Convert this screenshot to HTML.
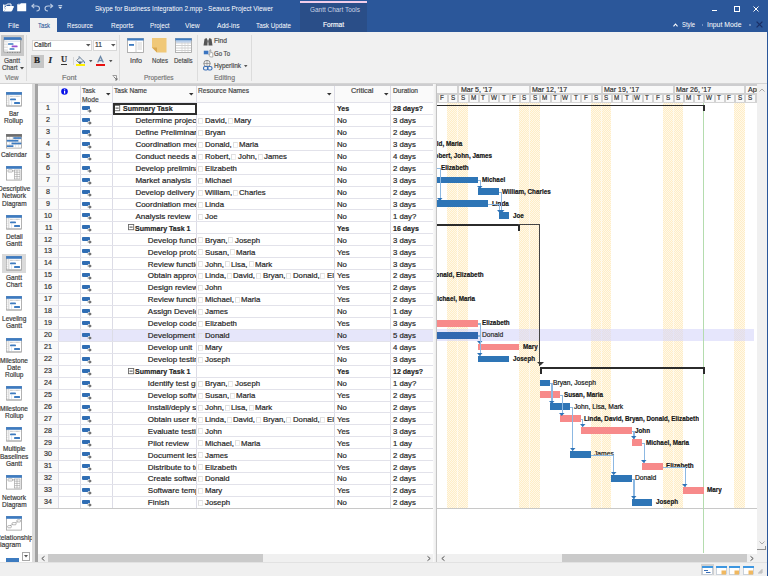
<!DOCTYPE html>
<html><head><meta charset="utf-8"><style>
html,body{margin:0;padding:0;width:768px;height:576px;overflow:hidden;background:#f0f0f0;}
body{position:relative;font-family:"Liberation Sans",sans-serif;}
body div{position:absolute;box-sizing:border-box;}
.t{white-space:nowrap;transform-origin:0 50%;-webkit-text-stroke:0.2px currentColor;}
svg{position:absolute;overflow:visible;}
</style></head><body>
<div style="left:0px;top:0px;width:768px;height:32px;background:#2b579a"></div>
<div style="left:300px;top:3px;width:67px;height:29px;background:#2a4e88"></div>
<div style="left:300px;top:1px;width:67px;height:2px;background:#f2cdea"></div>
<div class="t" style="left:95.00px;top:3.93px;font-size:8px;line-height:9.60px;color:#ffffff;transform:scaleX(0.8075);-webkit-text-stroke:0">Skype for Business Integration 2.mpp - Seavus Project Viewer</div>
<div class="t" style="left:310.00px;top:4.53px;font-size:8px;line-height:9.60px;color:#c9d3e6;transform:scaleX(0.8049);-webkit-text-stroke:0">Gantt Chart Tools</div>
<div style="left:30px;top:18px;width:27px;height:14px;background:#f1f1f1"></div>
<div class="t" style="left:8.00px;top:20.93px;font-size:8px;line-height:9.60px;color:#ffffff;transform:scaleX(0.8531);-webkit-text-stroke:0">File</div>
<div class="t" style="left:38.00px;top:20.93px;font-size:8px;line-height:9.60px;color:#2b579a;transform:scaleX(0.7294);-webkit-text-stroke:0.1px currentColor">Task</div>
<div class="t" style="left:67.00px;top:20.93px;font-size:8px;line-height:9.60px;color:#ffffff;transform:scaleX(0.7593);-webkit-text-stroke:0">Resource</div>
<div class="t" style="left:110.50px;top:20.93px;font-size:8px;line-height:9.60px;color:#ffffff;transform:scaleX(0.8031);-webkit-text-stroke:0">Reports</div>
<div class="t" style="left:150.00px;top:20.93px;font-size:8px;line-height:9.60px;color:#ffffff;transform:scaleX(0.7831);-webkit-text-stroke:0">Project</div>
<div class="t" style="left:185.00px;top:20.93px;font-size:8px;line-height:9.60px;color:#ffffff;transform:scaleX(0.8431);-webkit-text-stroke:0">View</div>
<div class="t" style="left:216.50px;top:20.93px;font-size:8px;line-height:9.60px;color:#ffffff;transform:scaleX(0.8294);-webkit-text-stroke:0">Add-ins</div>
<div class="t" style="left:256.00px;top:20.93px;font-size:8px;line-height:9.60px;color:#ffffff;transform:scaleX(0.7869);-webkit-text-stroke:0">Task Update</div>
<div class="t" style="left:323.00px;top:20.43px;font-size:8px;line-height:9.60px;color:#ffffff;transform:scaleX(0.8288);-webkit-text-stroke:0.15px currentColor">Format</div>
<div class="t" style="left:682.00px;top:19.93px;font-size:8px;line-height:9.60px;color:#ffffff;transform:scaleX(0.7309);-webkit-text-stroke:0">Style</div>
<div class="t" style="left:707.00px;top:19.93px;font-size:8px;line-height:9.60px;color:#ffffff;transform:scaleX(0.8618);-webkit-text-stroke:0">Input Mode</div>
<svg style="left:2.5px;top:3px" width="11" height="8.5" viewBox="0 0 11 8.5">
<path d="M0.5 1.5 V8 H8.5 L10.5 3.5 H3 L1.2 7.2 V2.2 H3.5 L4.3 1 H8 V3" fill="none" stroke="#fff" stroke-width="1"/>
<path d="M1.5 8 L3.2 4 H10.5 L8.5 8Z" fill="#fff"/>
</svg>
<svg style="left:16.5px;top:3px" width="9.5" height="8.5" viewBox="0 0 9.5 8.5">
<path d="M0.2 1.2 H3 L3.8 0.2 H9.2 V8.2 H0.2Z" fill="#fff"/>
<path d="M1 0.8 H2.8" stroke="#8aa4cc" stroke-width="0.6"/>
</svg>
<svg style="left:30.5px;top:3.2px" width="9.5" height="8.5" viewBox="0 0 9.5 8.5">
<path d="M3.2 0.8 L0.8 3 L3.2 5.2 M1 3 H5.5 Q8.5 3 8.5 5.5 Q8.5 8 5.5 8" fill="none" stroke="#b9c9e2" stroke-width="1.1"/>
</svg>
<svg style="left:44.2px;top:3.2px" width="9.5" height="8.5" viewBox="0 0 9.5 8.5">
<path d="M6.3 0.8 L8.7 3 L6.3 5.2 M8.5 3 H4 Q1 3 1 5.5 Q1 8 4 8" fill="none" stroke="#b9c9e2" stroke-width="1.1"/>
</svg>
<svg style="left:58px;top:5px" width="4.5" height="4.5" viewBox="0 0 4.5 4.5">
<path d="M0.3 0.5H4.2" stroke="#dfe6f2" stroke-width="0.8"/><path d="M0.3 1.8H4.2L2.25 4Z" fill="#dfe6f2"/>
</svg>
<div style="left:712px;top:9.8px;width:5px;height:1.2px;background:#fff"></div>
<div style="left:733.5px;top:6px;width:6px;height:5.5px;border:1px solid #fff;border-top-width:1.8px"></div>
<svg style="left:753px;top:6px" width="6" height="6" viewBox="0 0 6 6"><path d="M0.5 0.5L5.5 5.5M5.5 0.5L0.5 5.5" stroke="#fff" stroke-width="1"/></svg>
<svg style="left:673px;top:22.5px" width="5" height="4" viewBox="0 0 5 4"><path d="M0.5 3.3L2.5 1L4.5 3.3" stroke="#fff" stroke-width="1.1" fill="none"/></svg>
<div style="left:701.5px;top:24px;width:1.5px;height:1.5px;background:#6f8fc0"></div>
<div style="left:749px;top:24px;width:1.5px;height:1.5px;background:#6f8fc0"></div>
<svg style="left:755.5px;top:20.5px" width="7" height="7" viewBox="0 0 7 7"><path d="M0.6 0.6L6.4 6.4M6.4 0.6L0.6 6.4" stroke="#1a2f66" stroke-width="1.3"/></svg>
<div style="left:0px;top:32px;width:768px;height:52px;background:#f1f1f1"></div>
<div style="left:0px;top:83px;width:768px;height:1px;background:#d4d4d4"></div>
<div style="left:26px;top:35px;width:1px;height:46px;background:#dcdcdc"></div>
<div style="left:119px;top:35px;width:1px;height:46px;background:#dcdcdc"></div>
<div style="left:197px;top:35px;width:1px;height:46px;background:#dcdcdc"></div>
<div style="left:251px;top:35px;width:1px;height:46px;background:#dcdcdc"></div>
<div style="left:1px;top:35px;width:23px;height:21px;background:#c8c8c8"></div>
<svg style="left:3px;top:37px" width="19" height="17" viewBox="0 0 19 17">
<rect x="1" y="2.5" width="16.5" height="12.5" fill="#fff" stroke="#9a9a9a" stroke-width="0.8"/>
<rect x="0.8" y="0.2" width="17" height="2.6" fill="#3c78c0"/>
<path d="M17.8 0.2 L18.6 1.5 L18.6 3.5 L17.8 2.8Z" fill="#2d6aa8"/>
<rect x="1.2" y="3.5" width="3.6" height="11" fill="#e4e4e4"/>
<path d="M1.2 6H4.8M1.2 8.8H4.8M1.2 11.6H4.8" stroke="#fff" stroke-width="1.2"/>
<path d="M5 4.2H17" stroke="#c8d4e4" stroke-width="0.8"/>
<rect x="5" y="6.2" width="5.5" height="1.6" rx="0.6" fill="#3d7bc0"/>
<rect x="8.6" y="8.6" width="6" height="1.7" rx="0.6" fill="#9a4fd0"/>
<rect x="6.5" y="11.2" width="5" height="1.6" rx="0.6" fill="#3d7bc0"/>
<path d="M4 15.4H17.5" stroke="#777" stroke-width="0.8" stroke-dasharray="1 1.5"/>
</svg>
<div class="t" style="left:4.30px;top:55.63px;font-size:8px;line-height:9.60px;color:#4a4a4a;transform:scaleX(0.8176);">Gantt</div>
<div class="t" style="left:2.00px;top:62.83px;font-size:8px;line-height:9.60px;color:#4a4a4a;transform:scaleX(0.7922);">Chart</div>
<svg style="left:19.5px;top:66.5px" width="4" height="3"><path d="M0 0H4L2 2.5Z" fill="#444"/></svg>
<div class="t" style="left:5.00px;top:73.43px;font-size:8px;line-height:9.60px;color:#777777;transform:scaleX(0.7850);">View</div>
<div style="left:31.5px;top:39.5px;width:60px;height:11px;background:#fff;border:1px solid #d8d8d8"></div>
<div class="t" style="left:34.00px;top:40.43px;font-size:8px;line-height:9.60px;color:#333;transform:scaleX(0.7497);">Calibri</div>
<svg style="left:85.5px;top:43.5px" width="5" height="3"><path d="M0 0H4.5L2.25 2.5Z" fill="#555"/></svg>
<div style="left:92.5px;top:39.5px;width:24px;height:11px;background:#fff;border:1px solid #d8d8d8"></div>
<div class="t" style="left:94.50px;top:40.43px;font-size:8px;line-height:9.60px;color:#333;transform:scaleX(0.8427);">11</div>
<svg style="left:110.5px;top:43.5px" width="5" height="3"><path d="M0 0H4.5L2.25 2.5Z" fill="#555"/></svg>
<div style="left:31px;top:55px;width:13px;height:12.5px;background:#c6c6c6"></div>
<div class="t" style="left:34px;top:54.6px;font-family:'Liberation Serif',serif;font-weight:bold;font-size:9px;line-height:10px;color:#222">B</div>
<div class="t" style="left:48.5px;top:54.6px;font-family:'Liberation Serif',serif;font-style:italic;font-weight:bold;font-size:9px;line-height:10px;color:#222">I</div>
<div class="t" style="left:61px;top:54.3px;font-family:'Liberation Serif',serif;font-weight:bold;font-size:8.5px;line-height:10px;color:#333">U</div>
<div style="left:61px;top:64px;width:6px;height:0.8px;background:#333"></div>
<div style="left:72.5px;top:57px;width:1px;height:8px;background:#d8d8d8"></div>
<svg style="left:75px;top:55.5px" width="11" height="9" viewBox="0 0 11 9">
<path d="M1.5 4.5 L5 1.5 L8.5 5 L5 8Z" fill="#e8eef5" stroke="#6f8196" stroke-width="1"/>
<path d="M3.2 1.2 Q4.2 -0.2 5.6 1.6" stroke="#7a8ea6" stroke-width="0.9" fill="none"/>
<path d="M8.4 4.2 Q10.6 5.8 9.8 7.8 Q8.2 6.8 8.4 4.2Z" fill="#2d5b9a"/>
<path d="M3 5.5 L5 7.5 L7 5.5" fill="#4a5a70"/>
</svg>
<div style="left:75.5px;top:63.5px;width:9.5px;height:2px;background:#ffef00"></div>
<svg style="left:88.5px;top:59.5px" width="4" height="3"><path d="M0 0H3.5L1.75 2.2Z" fill="#555"/></svg>
<svg style="left:96.8px;top:56px" width="7" height="7" viewBox="0 0 7 7"><path d="M0.7 6.6 L3.5 0.5 L6.3 6.6 M1.8 4.5H5.2" stroke="#6a87a8" stroke-width="1.3" fill="none"/></svg>
<div style="left:96px;top:63.5px;width:8.5px;height:2px;background:#e81010"></div>
<svg style="left:108.5px;top:59.5px" width="4" height="3"><path d="M0 0H3.5L1.75 2.2Z" fill="#555"/></svg>
<div class="t" style="left:62.00px;top:73.43px;font-size:8px;line-height:9.60px;color:#777777;transform:scaleX(0.9056);">Font</div>
<svg style="left:112px;top:75px" width="6" height="6" viewBox="0 0 6 6"><path d="M0.5 0.5H4.5V4.5" stroke="#888" stroke-width="0.8" fill="none"/><path d="M1.5 1.5L5 5M3 5H5V3" stroke="#666" stroke-width="0.8" fill="none"/></svg>
<svg style="left:127px;top:37.5px" width="17" height="15" viewBox="0 0 17 15">
<rect x="0.5" y="0.5" width="16" height="14" fill="#fff" stroke="#a0a0a0" stroke-width="0.8"/>
<rect x="0.3" y="0.3" width="16.4" height="2.2" fill="#3d7bc0"/>
<rect x="2" y="6" width="5" height="1.8" fill="#3d7bc0"/>
<path d="M9 2.5V14.5" stroke="#c0c0c0" stroke-width="0.8"/>
<path d="M10.5 5H15M10.5 7H15M10.5 9H15M10.5 11H15" stroke="#c8c8c8" stroke-width="0.8"/>
</svg>
<svg style="left:151.5px;top:37.5px" width="15" height="15" viewBox="0 0 15 15">
<path d="M0 0H14.5V14.5H5L0 9.5Z" fill="#f0c878"/>
<path d="M0 9.5H5V14.5Z" fill="#d9a850"/>
</svg>
<svg style="left:175px;top:37.5px" width="17" height="15" viewBox="0 0 17 15">
<rect x="0.5" y="0.5" width="16" height="14" fill="#fff" stroke="#a0a0a0" stroke-width="0.8"/>
<rect x="0.3" y="0.3" width="16.4" height="2.2" fill="#3d7bc0"/>
<path d="M1 5H16M1 7.5H16M1 10H16M1 12.5H16" stroke="#c4c4c4" stroke-width="0.8"/>
<path d="M7 3V14M10 3V14M13 3V14" stroke="#d0d0d0" stroke-width="0.7"/>
<rect x="1" y="3" width="15" height="1.6" fill="#bcd0ea"/>
</svg>
<div class="t" style="left:129.50px;top:56.43px;font-size:8px;line-height:9.60px;color:#4a4a4a;transform:scaleX(0.8991);">Info</div>
<div class="t" style="left:151.50px;top:56.43px;font-size:8px;line-height:9.60px;color:#4a4a4a;transform:scaleX(0.7655);">Notes</div>
<div class="t" style="left:173.50px;top:56.43px;font-size:8px;line-height:9.60px;color:#4a4a4a;transform:scaleX(0.7564);">Details</div>
<div class="t" style="left:144.00px;top:73.43px;font-size:8px;line-height:9.60px;color:#777777;transform:scaleX(0.8090);">Properties</div>
<svg style="left:202.5px;top:37px" width="10" height="9" viewBox="0 0 10 9">
<path d="M0.5 8.5 L1.5 2 L3.5 1 L4.5 3 V8.5Z M5.5 8.5 V3 L6.5 1 L8.5 2 L9.5 8.5Z" fill="#555"/>
<rect x="3.8" y="3.5" width="2.4" height="2" fill="#777"/>
</svg>
<div class="t" style="left:214.00px;top:36.43px;font-size:8px;line-height:9.60px;color:#4a4a4a;transform:scaleX(0.8352);">Find</div>
<svg style="left:202.5px;top:48.5px" width="11" height="10" viewBox="0 0 11 10">
<rect x="0.8" y="1.7" width="4.6" height="3.6" fill="#3a74c0"/>
<path d="M6.8 1 V5.5 L6 5 Q5.5 5.5 6.2 6.3 L7.3 8 H9.8 V4.5 Q9.8 3.5 8.8 3.6 L7.8 3.7 V1 Q7.3 0.4 6.8 1Z" fill="#fff" stroke="#7a7a7a" stroke-width="0.6"/>
</svg>
<div class="t" style="left:214.00px;top:48.93px;font-size:8px;line-height:9.60px;color:#4a4a4a;transform:scaleX(0.7546);">Go To</div>
<svg style="left:202.5px;top:59.5px" width="10" height="11" viewBox="0 0 10 11">
<circle cx="4" cy="3.5" r="3.2" fill="none" stroke="#777" stroke-width="0.8"/>
<path d="M0.8 3.5H7.2M4 0.3V6.7" stroke="#777" stroke-width="0.6"/>
<rect x="0.5" y="6.5" width="4.5" height="3.5" rx="1.6" fill="none" stroke="#3a6fb8" stroke-width="1.1"/>
<rect x="4.5" y="6.5" width="4.5" height="3.5" rx="1.6" fill="none" stroke="#3a6fb8" stroke-width="1.1"/>
</svg>
<div class="t" style="left:214.00px;top:60.93px;font-size:8px;line-height:9.60px;color:#4a4a4a;transform:scaleX(0.8096);">Hyperlink</div>
<svg style="left:244px;top:64.5px" width="4" height="3"><path d="M0 0H3.5L1.75 2.2Z" fill="#555"/></svg>
<div class="t" style="left:214.00px;top:73.43px;font-size:8px;line-height:9.60px;color:#777777;transform:scaleX(0.8583);">Editing</div>
<div style="left:0px;top:84px;width:768px;height:478px;background:#ffffff"></div>
<div style="left:32px;top:84px;width:3px;height:478px;background:#dcdcdc"></div>
<div style="left:35px;top:84px;width:3px;height:478px;background:#a3a3a3"></div>
<div style="left:2px;top:253.5px;width:24px;height:19.5px;background:#dadada"></div>
<svg style="left:6.1px;top:92px" width="16" height="15" viewBox="0 0 16 15">
<rect x="0.5" y="0.5" width="15" height="13.6" fill="#fff" stroke="#a0a0a0" stroke-width="0.8"/>
<rect x="0.8" y="2.8" width="2" height="10.8" fill="#ececec"/>
<path d="M0.8 5H2.8M0.8 7.2H2.8M0.8 9.4H2.8M0.8 11.6H2.8" stroke="#fff" stroke-width="0.8"/>
<path d="M2.9 2.8V13.8" stroke="#b8b8b8" stroke-width="0.6"/>
<path d="M4 4.3H14.2" stroke="#8a8a8a" stroke-width="0.7" stroke-dasharray="0.7 0.5"/>
<path d="M5.6 8.5V13.5" stroke="#cfe0f2" stroke-width="0.8"/>
<rect x="4" y="6.4" width="6" height="1.9" rx="0.9" fill="#3d7bc0"/>
<rect x="8.1" y="10.1" width="5.9" height="1.8" rx="0.5" fill="#3d7bc0"/>
<path d="M1 13.8H15" stroke="#8a8a8a" stroke-width="0.5"/><rect x="0.1" y="0.1" width="15.8" height="2.7" fill="#3d7bc0"/></svg>
<div class="t" style="left:9.10px;top:108.90px;font-size:7.5px;line-height:9.00px;color:#3a3a3a;transform:scaleX(0.8225);">Bar</div>
<div class="t" style="left:4.45px;top:116.20px;font-size:7.5px;line-height:9.00px;color:#3a3a3a;transform:scaleX(0.8889);">Rollup</div>
<svg style="left:6.1px;top:133.5px" width="16" height="15" viewBox="0 0 16 15">
<rect x="0.5" y="0.5" width="15" height="13.6" fill="#fff" stroke="#a0a0a0" stroke-width="0.8"/>
<path d="M0.5 5.2H15.5M0.5 7.9H15.5M0.5 10.6H15.5" stroke="#cfcfcf" stroke-width="0.6"/>
<path d="M3.6 2.3V13.5M6.6 2.3V13.5M9.6 2.3V13.5M12.6 2.3V13.5" stroke="#d8d8d8" stroke-width="0.6"/>
<rect x="7.3" y="3.2" width="8" height="1.7" fill="#3d7bc0"/><rect x="0.8" y="5.9" width="11.5" height="1.7" fill="#3d7bc0"/>
<rect x="5.5" y="8.6" width="9.8" height="1.7" fill="#3d7bc0"/><rect x="0.8" y="11.3" width="6.6" height="1.7" fill="#3d7bc0"/><rect x="0.1" y="0.1" width="15.8" height="2.7" fill="#6e6e6e"/></svg>
<div class="t" style="left:1.03px;top:150.00px;font-size:7.5px;line-height:9.00px;color:#3a3a3a;transform:scaleX(0.8460);">Calendar</div>
<svg style="left:6.1px;top:166.3px" width="16" height="15" viewBox="0 0 16 15">
<rect x="0.5" y="0.5" width="15" height="13.6" fill="#fff" stroke="#a0a0a0" stroke-width="0.8"/>
<rect x="2" y="3.8" width="4.5" height="2.2" rx="0.6" fill="none" stroke="#8a8a8a" stroke-width="0.6"/><path d="M6.5 4.9H8.5" stroke="#8a8a8a" stroke-width="0.6"/><rect x="8.5" y="4" width="5.5" height="9" fill="none" stroke="#9a9a9a" stroke-width="0.6"/><path d="M8.5 6.2H14M8.5 8.4H14M8.5 10.6H14M11 4V13" stroke="#9a9a9a" stroke-width="0.6"/><rect x="0.1" y="0.1" width="15.8" height="2.7" fill="#3d7bc0"/></svg>
<div class="t" style="left:-2.24px;top:184.00px;font-size:7.5px;line-height:9.00px;color:#3a3a3a;transform:scaleX(0.8700);">Descriptive</div>
<div class="t" style="left:1.93px;top:191.30px;font-size:7.5px;line-height:9.00px;color:#3a3a3a;transform:scaleX(0.8700);">Network</div>
<div class="t" style="left:1.57px;top:198.50px;font-size:7.5px;line-height:9.00px;color:#3a3a3a;transform:scaleX(0.8700);">Diagram</div>
<svg style="left:6.1px;top:215px" width="16" height="15" viewBox="0 0 16 15">
<rect x="0.5" y="0.5" width="15" height="13.6" fill="#fff" stroke="#a0a0a0" stroke-width="0.8"/>
<rect x="0.8" y="2.8" width="2" height="10.8" fill="#ececec"/>
<path d="M0.8 5H2.8M0.8 7.2H2.8M0.8 9.4H2.8M0.8 11.6H2.8" stroke="#fff" stroke-width="0.8"/>
<path d="M2.9 2.8V13.8" stroke="#b8b8b8" stroke-width="0.6"/>
<path d="M4 4.3H14.2" stroke="#8a8a8a" stroke-width="0.7" stroke-dasharray="0.7 0.5"/>
<path d="M5.6 8.5V13.5" stroke="#cfe0f2" stroke-width="0.8"/>
<rect x="4" y="6.4" width="6" height="1.9" rx="0.9" fill="#3d7bc0"/>
<rect x="8.1" y="10.1" width="5.9" height="1.8" rx="0.5" fill="#3d7bc0"/>
<path d="M1 13.8H15" stroke="#8a8a8a" stroke-width="0.5"/><rect x="0.1" y="0.1" width="15.8" height="2.7" fill="#3d7bc0"/></svg>
<div class="t" style="left:5.56px;top:231.50px;font-size:7.5px;line-height:9.00px;color:#3a3a3a;transform:scaleX(0.8700);">Detail</div>
<div class="t" style="left:5.92px;top:239.10px;font-size:7.5px;line-height:9.00px;color:#3a3a3a;transform:scaleX(0.8700);">Gantt</div>
<svg style="left:6.1px;top:256px" width="16" height="15" viewBox="0 0 16 15">
<rect x="0.5" y="0.5" width="15" height="13.6" fill="#fff" stroke="#a0a0a0" stroke-width="0.8"/>
<rect x="0.8" y="2.8" width="2" height="10.8" fill="#ececec"/>
<path d="M0.8 5H2.8M0.8 7.2H2.8M0.8 9.4H2.8M0.8 11.6H2.8" stroke="#fff" stroke-width="0.8"/>
<path d="M2.9 2.8V13.8" stroke="#b8b8b8" stroke-width="0.6"/>
<path d="M4 4.3H14.2" stroke="#8a8a8a" stroke-width="0.7" stroke-dasharray="0.7 0.5"/>
<path d="M5.6 8.5V13.5" stroke="#cfe0f2" stroke-width="0.8"/>
<rect x="4" y="6.4" width="6" height="1.9" rx="0.9" fill="#3d7bc0"/>
<rect x="8.1" y="10.1" width="5.9" height="1.8" rx="0.5" fill="#3d7bc0"/>
<path d="M1 13.8H15" stroke="#8a8a8a" stroke-width="0.5"/><rect x="0.1" y="0.1" width="15.8" height="2.7" fill="#3d7bc0"/></svg>
<div class="t" style="left:5.92px;top:272.90px;font-size:7.5px;line-height:9.00px;color:#3a3a3a;transform:scaleX(0.8700);">Gantt</div>
<div class="t" style="left:5.92px;top:280.10px;font-size:7.5px;line-height:9.00px;color:#3a3a3a;transform:scaleX(0.8700);">Chart</div>
<svg style="left:6.1px;top:296.4px" width="16" height="15" viewBox="0 0 16 15">
<rect x="0.5" y="0.5" width="15" height="13.6" fill="#fff" stroke="#a0a0a0" stroke-width="0.8"/>
<rect x="0.8" y="2.8" width="2" height="10.8" fill="#ececec"/>
<path d="M0.8 5H2.8M0.8 7.2H2.8M0.8 9.4H2.8M0.8 11.6H2.8" stroke="#fff" stroke-width="0.8"/>
<path d="M2.9 2.8V13.8" stroke="#b8b8b8" stroke-width="0.6"/>
<path d="M4 4.3H14.2" stroke="#8a8a8a" stroke-width="0.7" stroke-dasharray="0.7 0.5"/>
<path d="M5.6 8.5V13.5" stroke="#cfe0f2" stroke-width="0.8"/>
<rect x="4" y="6.4" width="6" height="1.9" rx="0.9" fill="#3d7bc0"/>
<rect x="8.1" y="10.1" width="5.9" height="1.8" rx="0.5" fill="#3d7bc0"/>
<path d="M1 13.8H15" stroke="#8a8a8a" stroke-width="0.5"/><rect x="0.1" y="0.1" width="15.8" height="2.7" fill="#3d7bc0"/></svg>
<div class="t" style="left:1.75px;top:314.20px;font-size:7.5px;line-height:9.00px;color:#3a3a3a;transform:scaleX(0.8700);">Leveling</div>
<div class="t" style="left:5.92px;top:321.40px;font-size:7.5px;line-height:9.00px;color:#3a3a3a;transform:scaleX(0.8700);">Gantt</div>
<svg style="left:6.1px;top:337.7px" width="16" height="15" viewBox="0 0 16 15">
<rect x="0.5" y="0.5" width="15" height="13.6" fill="#fff" stroke="#a0a0a0" stroke-width="0.8"/>
<rect x="0.8" y="2.8" width="2" height="10.8" fill="#ececec"/>
<path d="M0.8 5H2.8M0.8 7.2H2.8M0.8 9.4H2.8M0.8 11.6H2.8" stroke="#fff" stroke-width="0.8"/>
<path d="M2.9 2.8V13.8" stroke="#b8b8b8" stroke-width="0.6"/>
<path d="M4 4.3H14.2" stroke="#8a8a8a" stroke-width="0.7" stroke-dasharray="0.7 0.5"/>
<path d="M5.6 8.5V13.5" stroke="#cfe0f2" stroke-width="0.8"/>
<rect x="4" y="6.4" width="6" height="1.9" rx="0.9" fill="#3d7bc0"/>
<rect x="8.1" y="10.1" width="5.9" height="1.8" rx="0.5" fill="#3d7bc0"/>
<path d="M1 13.8H15" stroke="#8a8a8a" stroke-width="0.5"/><rect x="0.1" y="0.1" width="15.8" height="2.7" fill="#3d7bc0"/></svg>
<div class="t" style="left:-0.06px;top:355.50px;font-size:7.5px;line-height:9.00px;color:#3a3a3a;transform:scaleX(0.8700);">Milestone</div>
<div class="t" style="left:7.01px;top:363.00px;font-size:7.5px;line-height:9.00px;color:#3a3a3a;transform:scaleX(0.8700);">Date</div>
<div class="t" style="left:4.65px;top:369.90px;font-size:7.5px;line-height:9.00px;color:#3a3a3a;transform:scaleX(0.8700);">Rollup</div>
<svg style="left:6.1px;top:386px" width="16" height="15" viewBox="0 0 16 15">
<rect x="0.5" y="0.5" width="15" height="13.6" fill="#fff" stroke="#a0a0a0" stroke-width="0.8"/>
<rect x="0.8" y="2.8" width="2" height="10.8" fill="#ececec"/>
<path d="M0.8 5H2.8M0.8 7.2H2.8M0.8 9.4H2.8M0.8 11.6H2.8" stroke="#fff" stroke-width="0.8"/>
<path d="M2.9 2.8V13.8" stroke="#b8b8b8" stroke-width="0.6"/>
<path d="M4 4.3H14.2" stroke="#8a8a8a" stroke-width="0.7" stroke-dasharray="0.7 0.5"/>
<path d="M5.6 8.5V13.5" stroke="#cfe0f2" stroke-width="0.8"/>
<rect x="4" y="6.4" width="6" height="1.9" rx="0.9" fill="#3d7bc0"/>
<rect x="8.1" y="10.1" width="5.9" height="1.8" rx="0.5" fill="#3d7bc0"/>
<path d="M1 13.8H15" stroke="#8a8a8a" stroke-width="0.5"/><rect x="0.1" y="0.1" width="15.8" height="2.7" fill="#3d7bc0"/></svg>
<div class="t" style="left:-0.06px;top:403.50px;font-size:7.5px;line-height:9.00px;color:#3a3a3a;transform:scaleX(0.8700);">Milestone</div>
<div class="t" style="left:4.65px;top:410.50px;font-size:7.5px;line-height:9.00px;color:#3a3a3a;transform:scaleX(0.8700);">Rollup</div>
<svg style="left:6.1px;top:427px" width="16" height="15" viewBox="0 0 16 15">
<rect x="0.5" y="0.5" width="15" height="13.6" fill="#fff" stroke="#a0a0a0" stroke-width="0.8"/>
<rect x="0.8" y="2.8" width="2" height="10.8" fill="#ececec"/>
<path d="M0.8 5H2.8M0.8 7.2H2.8M0.8 9.4H2.8M0.8 11.6H2.8" stroke="#fff" stroke-width="0.8"/>
<path d="M2.9 2.8V13.8" stroke="#b8b8b8" stroke-width="0.6"/>
<path d="M4 4.3H14.2" stroke="#8a8a8a" stroke-width="0.7" stroke-dasharray="0.7 0.5"/>
<path d="M5.6 8.5V13.5" stroke="#cfe0f2" stroke-width="0.8"/>
<rect x="4" y="6.4" width="6" height="1.9" rx="0.9" fill="#3d7bc0"/>
<rect x="8.1" y="10.1" width="5.9" height="1.8" rx="0.5" fill="#3d7bc0"/>
<path d="M1 13.8H15" stroke="#8a8a8a" stroke-width="0.5"/><rect x="0.1" y="0.1" width="15.8" height="2.7" fill="#3d7bc0"/></svg>
<div class="t" style="left:2.66px;top:444.30px;font-size:7.5px;line-height:9.00px;color:#3a3a3a;transform:scaleX(0.8700);">Multiple</div>
<div class="t" style="left:-0.25px;top:451.50px;font-size:7.5px;line-height:9.00px;color:#3a3a3a;transform:scaleX(0.8700);">Baselines</div>
<div class="t" style="left:5.92px;top:458.50px;font-size:7.5px;line-height:9.00px;color:#3a3a3a;transform:scaleX(0.8700);">Gantt</div>
<svg style="left:6.1px;top:475px" width="16" height="15" viewBox="0 0 16 15">
<rect x="0.5" y="0.5" width="15" height="13.6" fill="#fff" stroke="#a0a0a0" stroke-width="0.8"/>
<rect x="2" y="3.8" width="4.5" height="2.2" rx="0.6" fill="none" stroke="#8a8a8a" stroke-width="0.6"/><path d="M6.5 4.9H8.5" stroke="#8a8a8a" stroke-width="0.6"/><rect x="8.5" y="4" width="5.5" height="9" fill="none" stroke="#9a9a9a" stroke-width="0.6"/><path d="M8.5 6.2H14M8.5 8.4H14M8.5 10.6H14M11 4V13" stroke="#9a9a9a" stroke-width="0.6"/><rect x="0.1" y="0.1" width="15.8" height="2.7" fill="#3d7bc0"/></svg>
<div class="t" style="left:1.93px;top:493.00px;font-size:7.5px;line-height:9.00px;color:#3a3a3a;transform:scaleX(0.8700);">Network</div>
<div class="t" style="left:1.57px;top:499.50px;font-size:7.5px;line-height:9.00px;color:#3a3a3a;transform:scaleX(0.8700);">Diagram</div>
<svg style="left:6.1px;top:516.4px" width="16" height="15" viewBox="0 0 16 15">
<rect x="0.5" y="0.5" width="15" height="13.6" fill="#fff" stroke="#a0a0a0" stroke-width="0.8"/>
<rect x="1.6" y="9.6" width="3.8" height="2.2" rx="1" fill="none" stroke="#8a8a8a" stroke-width="0.6"/><rect x="6" y="6.6" width="4.2" height="2.2" rx="1" fill="none" stroke="#8a8a8a" stroke-width="0.6"/><rect x="10.8" y="3.8" width="3.8" height="2.2" rx="1" fill="none" stroke="#8a8a8a" stroke-width="0.6"/><path d="M4 9.6L6.5 8.6M9.5 6.6L11.5 5.8" stroke="#8a8a8a" stroke-width="0.6"/><rect x="0.1" y="0.1" width="15.8" height="2.7" fill="#3d7bc0"/></svg>
<div class="t" style="left:-4.20px;top:533.40px;font-size:7.5px;line-height:9.00px;color:#3a3a3a;transform:scaleX(0.8964);">Relationship</div>
<div class="t" style="left:-5.50px;top:540.20px;font-size:7.5px;line-height:9.00px;color:#3a3a3a;transform:scaleX(0.9174);">Diagram</div>
<div style="left:32px;top:500px;width:0.01px;height:1px;"></div>
<div style="left:0;top:549px;width:32px;height:13px;background:#fff"></div>
<div style="left:22px;top:552px;width:8px;height:8.5px;background:#fff;border:1px solid #a8a8a8"></div>
<svg style="left:24px;top:555px" width="4" height="3"><path d="M0 0H4L2 2.5Z" fill="#555"/></svg>
<div style="left:5.5px;top:558px;width:13.5px;height:4px;background:#3d7bc0"></div>
<div style="left:32px;top:84px;width:3px;height:478px;background:#dcdcdc"></div>
<div style="left:35px;top:84px;width:3px;height:478px;background:#a3a3a3"></div>
<div style="left:38px;top:84px;width:395px;height:2px;background:#cdcdcf"></div>
<div style="left:38px;top:86px;width:20.5px;height:422.26px;background:#f9f9f9"></div>
<div style="left:58.5px;top:86px;width:374px;height:16.3px;background:#fafafa"></div>
<div style="left:58.5px;top:329.26px;width:374px;height:11.5px;background:#e6e6fa"></div>
<div style="left:58px;top:86px;width:1px;height:422.26px;background:#dcdce6"></div>
<div style="left:80px;top:86px;width:1px;height:422.26px;background:#dcdce6"></div>
<div style="left:112px;top:86px;width:1px;height:422.26px;background:#dcdce6"></div>
<div style="left:196px;top:86px;width:1px;height:422.26px;background:#dcdce6"></div>
<div style="left:334px;top:86px;width:1px;height:422.26px;background:#dcdce6"></div>
<div style="left:390.3px;top:86px;width:1px;height:422.26px;background:#dcdce6"></div>
<div style="left:38px;top:102.0px;width:395px;height:1px;background:#e2e2ea"></div>
<div style="left:38px;top:113.94px;width:395px;height:1px;background:#e2e2ea"></div>
<div style="left:38px;top:125.88px;width:395px;height:1px;background:#e2e2ea"></div>
<div style="left:38px;top:137.82px;width:395px;height:1px;background:#e2e2ea"></div>
<div style="left:38px;top:149.76px;width:395px;height:1px;background:#e2e2ea"></div>
<div style="left:38px;top:161.7px;width:395px;height:1px;background:#e2e2ea"></div>
<div style="left:38px;top:173.64px;width:395px;height:1px;background:#e2e2ea"></div>
<div style="left:38px;top:185.57999999999998px;width:395px;height:1px;background:#e2e2ea"></div>
<div style="left:38px;top:197.51999999999998px;width:395px;height:1px;background:#e2e2ea"></div>
<div style="left:38px;top:209.45999999999998px;width:395px;height:1px;background:#e2e2ea"></div>
<div style="left:38px;top:221.39999999999998px;width:395px;height:1px;background:#e2e2ea"></div>
<div style="left:38px;top:233.33999999999997px;width:395px;height:1px;background:#e2e2ea"></div>
<div style="left:38px;top:245.27999999999997px;width:395px;height:1px;background:#e2e2ea"></div>
<div style="left:38px;top:257.21999999999997px;width:395px;height:1px;background:#e2e2ea"></div>
<div style="left:38px;top:269.15999999999997px;width:395px;height:1px;background:#e2e2ea"></div>
<div style="left:38px;top:281.09999999999997px;width:395px;height:1px;background:#e2e2ea"></div>
<div style="left:38px;top:293.03999999999996px;width:395px;height:1px;background:#e2e2ea"></div>
<div style="left:38px;top:304.97999999999996px;width:395px;height:1px;background:#e2e2ea"></div>
<div style="left:38px;top:316.91999999999996px;width:395px;height:1px;background:#e2e2ea"></div>
<div style="left:38px;top:328.85999999999996px;width:395px;height:1px;background:#e2e2ea"></div>
<div style="left:38px;top:340.79999999999995px;width:395px;height:1px;background:#e2e2ea"></div>
<div style="left:38px;top:352.73999999999995px;width:395px;height:1px;background:#e2e2ea"></div>
<div style="left:38px;top:364.68px;width:395px;height:1px;background:#e2e2ea"></div>
<div style="left:38px;top:376.62px;width:395px;height:1px;background:#e2e2ea"></div>
<div style="left:38px;top:388.56px;width:395px;height:1px;background:#e2e2ea"></div>
<div style="left:38px;top:400.5px;width:395px;height:1px;background:#e2e2ea"></div>
<div style="left:38px;top:412.44px;width:395px;height:1px;background:#e2e2ea"></div>
<div style="left:38px;top:424.38px;width:395px;height:1px;background:#e2e2ea"></div>
<div style="left:38px;top:436.32px;width:395px;height:1px;background:#e2e2ea"></div>
<div style="left:38px;top:448.26px;width:395px;height:1px;background:#e2e2ea"></div>
<div style="left:38px;top:460.2px;width:395px;height:1px;background:#e2e2ea"></div>
<div style="left:38px;top:472.14px;width:395px;height:1px;background:#e2e2ea"></div>
<div style="left:38px;top:484.08px;width:395px;height:1px;background:#e2e2ea"></div>
<div style="left:38px;top:496.02px;width:395px;height:1px;background:#e2e2ea"></div>
<div style="left:38px;top:507.76px;width:395px;height:1.2px;background:#c8c8c8"></div>
<svg style="left:60.8px;top:87.8px" width="7" height="7" viewBox="0 0 7 7"><circle cx="3.5" cy="3.5" r="3.3" fill="#0a14e8"/><rect x="3" y="3" width="1.2" height="2.6" fill="#fff"/><rect x="3" y="1.4" width="1.2" height="1" fill="#fff"/></svg>
<div class="t" style="left:82.00px;top:85.90px;font-size:7.5px;line-height:9.00px;color:#444;transform:scaleX(0.8559);">Task</div>
<div class="t" style="left:82.00px;top:94.50px;font-size:7.5px;line-height:9.00px;color:#444;transform:scaleX(0.8954);">Mode</div>
<svg style="left:105.5px;top:93px" width="5" height="3"><path d="M0 0H4.5L2.25 2.6Z" fill="#333"/></svg>
<div class="t" style="left:114.00px;top:85.90px;font-size:7.5px;line-height:9.00px;color:#444;transform:scaleX(0.8797);">Task Name</div>
<svg style="left:189.3px;top:93px" width="5" height="3"><path d="M0 0H4.5L2.25 2.6Z" fill="#333"/></svg>
<div class="t" style="left:197.60px;top:85.90px;font-size:7.5px;line-height:9.00px;color:#444;transform:scaleX(0.8819);">Resource Names</div>
<svg style="left:327px;top:93px" width="5" height="3"><path d="M0 0H4.5L2.25 2.6Z" fill="#333"/></svg>
<div class="t" style="left:351.20px;top:85.90px;font-size:7.5px;line-height:9.00px;color:#444;transform:scaleX(0.9819);">Critical</div>
<svg style="left:383.6px;top:93px" width="5" height="3"><path d="M0 0H4.5L2.25 2.6Z" fill="#333"/></svg>
<div class="t" style="left:392.50px;top:85.90px;font-size:7.5px;line-height:9.00px;color:#444;transform:scaleX(0.8818);">Duration</div>
<div class="t" style="left:46.32px;top:103.20px;font-size:7.5px;line-height:9.00px;color:#333;transform:scaleX(0.9500);">1</div>
<svg style="left:82.2px;top:106.00px" width="10" height="7" viewBox="0 0 10 7"><rect x="0" y="0" width="8" height="3.9" rx="0.8" fill="#2f6db4"/><circle cx="7.4" cy="5" r="1.9" fill="#fff"/><path d="M5.6 5H8.6M7.4 3.6L8.9 5L7.4 6.4" stroke="#6a6a6a" stroke-width="1.2" fill="none"/></svg>
<svg style="left:114.2px;top:105.00px" width="6" height="6" viewBox="0 0 6 6"><rect x="0.5" y="0.5" width="5.2" height="5.2" fill="#fff" stroke="#6a6a6a" stroke-width="0.9"/><path d="M1.5 3.1H4.7" stroke="#333" stroke-width="0.9"/></svg>
<div style="left:112.5px;top:102.30px;width:83.3px;height:11.9px;overflow:hidden">
<div class="t" style="left:10.20px;top:2.03px;font-size:8px;line-height:9.60px;color:#262626;font-weight:bold;transform:scaleX(0.8800);">Summary Task</div>
</div>
<div class="t" style="left:336.80px;top:104.33px;font-size:8px;line-height:9.60px;color:#262626;font-weight:bold;transform:scaleX(0.8800);">Yes</div>
<div class="t" style="left:393.00px;top:104.33px;font-size:8px;line-height:9.60px;color:#262626;font-weight:bold;transform:scaleX(0.8800);">28 days?</div>
<div class="t" style="left:46.32px;top:115.14px;font-size:7.5px;line-height:9.00px;color:#333;transform:scaleX(0.9500);">2</div>
<svg style="left:82.2px;top:117.94px" width="10" height="7" viewBox="0 0 10 7"><rect x="0" y="0" width="8" height="3.9" rx="0.8" fill="#2f6db4"/><circle cx="7.4" cy="5" r="1.9" fill="#fff"/><path d="M5.6 5H8.6M7.4 3.6L8.9 5L7.4 6.4" stroke="#6a6a6a" stroke-width="1.2" fill="none"/></svg>
<div style="left:112.5px;top:114.24px;width:83.3px;height:11.9px;overflow:hidden">
<div class="t" style="left:22.90px;top:2.03px;font-size:8px;line-height:9.60px;color:#262626;">Determine project scope</div>
</div>
<div style="left:196.8px;top:114.24px;width:137px;height:11.9px;overflow:hidden">
<div style="left:1.70px;top:3.8px;width:5px;height:6px;border:1px solid #dedede;border-right-color:#ececec;border-bottom-color:#ececec"></div>
<div class="t" style="left:8.00px;top:2.03px;font-size:8px;line-height:9.60px;color:#262626;transform:scaleX(0.9700);">David,</div>
<div style="left:31.10px;top:3.8px;width:5px;height:6px;border:1px solid #dedede;border-right-color:#ececec;border-bottom-color:#ececec"></div>
<div class="t" style="left:37.40px;top:2.03px;font-size:8px;line-height:9.60px;color:#262626;transform:scaleX(0.9700);">Mary</div>
</div>
<div class="t" style="left:336.80px;top:116.27px;font-size:8px;line-height:9.60px;color:#262626;transform:scaleX(0.9700);">No</div>
<div class="t" style="left:393.00px;top:116.27px;font-size:8px;line-height:9.60px;color:#262626;transform:scaleX(0.9700);">3 days</div>
<div class="t" style="left:46.32px;top:127.08px;font-size:7.5px;line-height:9.00px;color:#333;transform:scaleX(0.9500);">3</div>
<svg style="left:82.2px;top:129.88px" width="10" height="7" viewBox="0 0 10 7"><rect x="0" y="0" width="8" height="3.9" rx="0.8" fill="#2f6db4"/><circle cx="7.4" cy="5" r="1.9" fill="#fff"/><path d="M5.6 5H8.6M7.4 3.6L8.9 5L7.4 6.4" stroke="#6a6a6a" stroke-width="1.2" fill="none"/></svg>
<div style="left:112.5px;top:126.18px;width:83.3px;height:11.9px;overflow:hidden">
<div class="t" style="left:22.90px;top:2.03px;font-size:8px;line-height:9.60px;color:#262626;">Define Preliminary resources</div>
</div>
<div style="left:196.8px;top:126.18px;width:137px;height:11.9px;overflow:hidden">
<div style="left:1.70px;top:3.8px;width:5px;height:6px;border:1px solid #dedede;border-right-color:#ececec;border-bottom-color:#ececec"></div>
<div class="t" style="left:8.00px;top:2.03px;font-size:8px;line-height:9.60px;color:#262626;transform:scaleX(0.9700);">Bryan</div>
</div>
<div class="t" style="left:336.80px;top:128.21px;font-size:8px;line-height:9.60px;color:#262626;transform:scaleX(0.9700);">No</div>
<div class="t" style="left:393.00px;top:128.21px;font-size:8px;line-height:9.60px;color:#262626;transform:scaleX(0.9700);">2 days</div>
<div class="t" style="left:46.32px;top:139.02px;font-size:7.5px;line-height:9.00px;color:#333;transform:scaleX(0.9500);">4</div>
<svg style="left:82.2px;top:141.82px" width="10" height="7" viewBox="0 0 10 7"><rect x="0" y="0" width="8" height="3.9" rx="0.8" fill="#2f6db4"/><circle cx="7.4" cy="5" r="1.9" fill="#fff"/><path d="M5.6 5H8.6M7.4 3.6L8.9 5L7.4 6.4" stroke="#6a6a6a" stroke-width="1.2" fill="none"/></svg>
<div style="left:112.5px;top:138.12px;width:83.3px;height:11.9px;overflow:hidden">
<div class="t" style="left:22.90px;top:2.03px;font-size:8px;line-height:9.60px;color:#262626;">Coordination meeting</div>
</div>
<div style="left:196.8px;top:138.12px;width:137px;height:11.9px;overflow:hidden">
<div style="left:1.70px;top:3.8px;width:5px;height:6px;border:1px solid #dedede;border-right-color:#ececec;border-bottom-color:#ececec"></div>
<div class="t" style="left:8.00px;top:2.03px;font-size:8px;line-height:9.60px;color:#262626;transform:scaleX(0.9700);">Donald,</div>
<div style="left:35.85px;top:3.8px;width:5px;height:6px;border:1px solid #dedede;border-right-color:#ececec;border-bottom-color:#ececec"></div>
<div class="t" style="left:42.15px;top:2.03px;font-size:8px;line-height:9.60px;color:#262626;transform:scaleX(0.9700);">Maria</div>
</div>
<div class="t" style="left:336.80px;top:140.15px;font-size:8px;line-height:9.60px;color:#262626;transform:scaleX(0.9700);">No</div>
<div class="t" style="left:393.00px;top:140.15px;font-size:8px;line-height:9.60px;color:#262626;transform:scaleX(0.9700);">3 days</div>
<div class="t" style="left:46.32px;top:150.96px;font-size:7.5px;line-height:9.00px;color:#333;transform:scaleX(0.9500);">5</div>
<svg style="left:82.2px;top:153.76px" width="10" height="7" viewBox="0 0 10 7"><rect x="0" y="0" width="8" height="3.9" rx="0.8" fill="#2f6db4"/><circle cx="7.4" cy="5" r="1.9" fill="#fff"/><path d="M5.6 5H8.6M7.4 3.6L8.9 5L7.4 6.4" stroke="#6a6a6a" stroke-width="1.2" fill="none"/></svg>
<div style="left:112.5px;top:150.06px;width:83.3px;height:11.9px;overflow:hidden">
<div class="t" style="left:22.90px;top:2.03px;font-size:8px;line-height:9.60px;color:#262626;">Conduct needs analysis</div>
</div>
<div style="left:196.8px;top:150.06px;width:137px;height:11.9px;overflow:hidden">
<div style="left:1.70px;top:3.8px;width:5px;height:6px;border:1px solid #dedede;border-right-color:#ececec;border-bottom-color:#ececec"></div>
<div class="t" style="left:8.00px;top:2.03px;font-size:8px;line-height:9.60px;color:#262626;transform:scaleX(0.9700);">Robert,</div>
<div style="left:34.55px;top:3.8px;width:5px;height:6px;border:1px solid #dedede;border-right-color:#ececec;border-bottom-color:#ececec"></div>
<div class="t" style="left:40.85px;top:2.03px;font-size:8px;line-height:9.60px;color:#262626;transform:scaleX(0.9700);">John,</div>
<div style="left:60.94px;top:3.8px;width:5px;height:6px;border:1px solid #dedede;border-right-color:#ececec;border-bottom-color:#ececec"></div>
<div class="t" style="left:67.24px;top:2.03px;font-size:8px;line-height:9.60px;color:#262626;transform:scaleX(0.9700);">James</div>
</div>
<div class="t" style="left:336.80px;top:152.09px;font-size:8px;line-height:9.60px;color:#262626;transform:scaleX(0.9700);">No</div>
<div class="t" style="left:393.00px;top:152.09px;font-size:8px;line-height:9.60px;color:#262626;transform:scaleX(0.9700);">4 days</div>
<div class="t" style="left:46.32px;top:162.90px;font-size:7.5px;line-height:9.00px;color:#333;transform:scaleX(0.9500);">6</div>
<svg style="left:82.2px;top:165.70px" width="10" height="7" viewBox="0 0 10 7"><rect x="0" y="0" width="8" height="3.9" rx="0.8" fill="#2f6db4"/><circle cx="7.4" cy="5" r="1.9" fill="#fff"/><path d="M5.6 5H8.6M7.4 3.6L8.9 5L7.4 6.4" stroke="#6a6a6a" stroke-width="1.2" fill="none"/></svg>
<div style="left:112.5px;top:162.00px;width:83.3px;height:11.9px;overflow:hidden">
<div class="t" style="left:22.90px;top:2.03px;font-size:8px;line-height:9.60px;color:#262626;">Develop preliminary</div>
</div>
<div style="left:196.8px;top:162.00px;width:137px;height:11.9px;overflow:hidden">
<div style="left:1.70px;top:3.8px;width:5px;height:6px;border:1px solid #dedede;border-right-color:#ececec;border-bottom-color:#ececec"></div>
<div class="t" style="left:8.00px;top:2.03px;font-size:8px;line-height:9.60px;color:#262626;transform:scaleX(0.9700);">Elizabeth</div>
</div>
<div class="t" style="left:336.80px;top:164.03px;font-size:8px;line-height:9.60px;color:#262626;transform:scaleX(0.9700);">No</div>
<div class="t" style="left:393.00px;top:164.03px;font-size:8px;line-height:9.60px;color:#262626;transform:scaleX(0.9700);">2 days</div>
<div class="t" style="left:46.32px;top:174.84px;font-size:7.5px;line-height:9.00px;color:#333;transform:scaleX(0.9500);">7</div>
<svg style="left:82.2px;top:177.64px" width="10" height="7" viewBox="0 0 10 7"><rect x="0" y="0" width="8" height="3.9" rx="0.8" fill="#2f6db4"/><circle cx="7.4" cy="5" r="1.9" fill="#fff"/><path d="M5.6 5H8.6M7.4 3.6L8.9 5L7.4 6.4" stroke="#6a6a6a" stroke-width="1.2" fill="none"/></svg>
<div style="left:112.5px;top:173.94px;width:83.3px;height:11.9px;overflow:hidden">
<div class="t" style="left:22.90px;top:2.03px;font-size:8px;line-height:9.60px;color:#262626;">Market analysis</div>
</div>
<div style="left:196.8px;top:173.94px;width:137px;height:11.9px;overflow:hidden">
<div style="left:1.70px;top:3.8px;width:5px;height:6px;border:1px solid #dedede;border-right-color:#ececec;border-bottom-color:#ececec"></div>
<div class="t" style="left:8.00px;top:2.03px;font-size:8px;line-height:9.60px;color:#262626;transform:scaleX(0.9700);">Michael</div>
</div>
<div class="t" style="left:336.80px;top:175.97px;font-size:8px;line-height:9.60px;color:#262626;transform:scaleX(0.9700);">No</div>
<div class="t" style="left:393.00px;top:175.97px;font-size:8px;line-height:9.60px;color:#262626;transform:scaleX(0.9700);">3 days</div>
<div class="t" style="left:46.32px;top:186.78px;font-size:7.5px;line-height:9.00px;color:#333;transform:scaleX(0.9500);">8</div>
<svg style="left:82.2px;top:189.58px" width="10" height="7" viewBox="0 0 10 7"><rect x="0" y="0" width="8" height="3.9" rx="0.8" fill="#2f6db4"/><circle cx="7.4" cy="5" r="1.9" fill="#fff"/><path d="M5.6 5H8.6M7.4 3.6L8.9 5L7.4 6.4" stroke="#6a6a6a" stroke-width="1.2" fill="none"/></svg>
<div style="left:112.5px;top:185.88px;width:83.3px;height:11.9px;overflow:hidden">
<div class="t" style="left:22.90px;top:2.03px;font-size:8px;line-height:9.60px;color:#262626;">Develop delivery</div>
</div>
<div style="left:196.8px;top:185.88px;width:137px;height:11.9px;overflow:hidden">
<div style="left:1.70px;top:3.8px;width:5px;height:6px;border:1px solid #dedede;border-right-color:#ececec;border-bottom-color:#ececec"></div>
<div class="t" style="left:8.00px;top:2.03px;font-size:8px;line-height:9.60px;color:#262626;transform:scaleX(0.9700);">William,</div>
<div style="left:36.26px;top:3.8px;width:5px;height:6px;border:1px solid #dedede;border-right-color:#ececec;border-bottom-color:#ececec"></div>
<div class="t" style="left:42.56px;top:2.03px;font-size:8px;line-height:9.60px;color:#262626;transform:scaleX(0.9700);">Charles</div>
</div>
<div class="t" style="left:336.80px;top:187.91px;font-size:8px;line-height:9.60px;color:#262626;transform:scaleX(0.9700);">No</div>
<div class="t" style="left:393.00px;top:187.91px;font-size:8px;line-height:9.60px;color:#262626;transform:scaleX(0.9700);">2 days</div>
<div class="t" style="left:46.32px;top:198.72px;font-size:7.5px;line-height:9.00px;color:#333;transform:scaleX(0.9500);">9</div>
<svg style="left:82.2px;top:201.52px" width="10" height="7" viewBox="0 0 10 7"><rect x="0" y="0" width="8" height="3.9" rx="0.8" fill="#2f6db4"/><circle cx="7.4" cy="5" r="1.9" fill="#fff"/><path d="M5.6 5H8.6M7.4 3.6L8.9 5L7.4 6.4" stroke="#6a6a6a" stroke-width="1.2" fill="none"/></svg>
<div style="left:112.5px;top:197.82px;width:83.3px;height:11.9px;overflow:hidden">
<div class="t" style="left:22.90px;top:2.03px;font-size:8px;line-height:9.60px;color:#262626;">Coordniation meeting</div>
</div>
<div style="left:196.8px;top:197.82px;width:137px;height:11.9px;overflow:hidden">
<div style="left:1.70px;top:3.8px;width:5px;height:6px;border:1px solid #dedede;border-right-color:#ececec;border-bottom-color:#ececec"></div>
<div class="t" style="left:8.00px;top:2.03px;font-size:8px;line-height:9.60px;color:#262626;transform:scaleX(0.9700);">Linda</div>
</div>
<div class="t" style="left:336.80px;top:199.85px;font-size:8px;line-height:9.60px;color:#262626;transform:scaleX(0.9700);">No</div>
<div class="t" style="left:393.00px;top:199.85px;font-size:8px;line-height:9.60px;color:#262626;transform:scaleX(0.9700);">3 days</div>
<div class="t" style="left:44.34px;top:210.66px;font-size:7.5px;line-height:9.00px;color:#333;transform:scaleX(0.9500);">10</div>
<svg style="left:82.2px;top:213.46px" width="10" height="7" viewBox="0 0 10 7"><rect x="0" y="0" width="8" height="3.9" rx="0.8" fill="#2f6db4"/><circle cx="7.4" cy="5" r="1.9" fill="#fff"/><path d="M5.6 5H8.6M7.4 3.6L8.9 5L7.4 6.4" stroke="#6a6a6a" stroke-width="1.2" fill="none"/></svg>
<div style="left:112.5px;top:209.76px;width:83.3px;height:11.9px;overflow:hidden">
<div class="t" style="left:22.90px;top:2.03px;font-size:8px;line-height:9.60px;color:#262626;">Analysis review</div>
</div>
<div style="left:196.8px;top:209.76px;width:137px;height:11.9px;overflow:hidden">
<div style="left:1.70px;top:3.8px;width:5px;height:6px;border:1px solid #dedede;border-right-color:#ececec;border-bottom-color:#ececec"></div>
<div class="t" style="left:8.00px;top:2.03px;font-size:8px;line-height:9.60px;color:#262626;transform:scaleX(0.9700);">Joe</div>
</div>
<div class="t" style="left:336.80px;top:211.79px;font-size:8px;line-height:9.60px;color:#262626;transform:scaleX(0.9700);">No</div>
<div class="t" style="left:393.00px;top:211.79px;font-size:8px;line-height:9.60px;color:#262626;transform:scaleX(0.9700);">1 day?</div>
<div class="t" style="left:44.60px;top:222.60px;font-size:7.5px;line-height:9.00px;color:#333;transform:scaleX(0.9500);">11</div>
<svg style="left:82.2px;top:225.40px" width="10" height="7" viewBox="0 0 10 7"><rect x="0" y="0" width="8" height="3.9" rx="0.8" fill="#2f6db4"/><circle cx="7.4" cy="5" r="1.9" fill="#fff"/><path d="M5.6 5H8.6M7.4 3.6L8.9 5L7.4 6.4" stroke="#6a6a6a" stroke-width="1.2" fill="none"/></svg>
<svg style="left:127.5px;top:224.40px" width="6" height="6" viewBox="0 0 6 6"><rect x="0.5" y="0.5" width="5.2" height="5.2" fill="#fff" stroke="#6a6a6a" stroke-width="0.9"/><path d="M1.5 3.1H4.7" stroke="#333" stroke-width="0.9"/></svg>
<div style="left:112.5px;top:221.70px;width:83.3px;height:11.9px;overflow:hidden">
<div class="t" style="left:22.80px;top:2.03px;font-size:8px;line-height:9.60px;color:#262626;font-weight:bold;transform:scaleX(0.8800);">Summary Task 1</div>
</div>
<div class="t" style="left:336.80px;top:223.73px;font-size:8px;line-height:9.60px;color:#262626;font-weight:bold;transform:scaleX(0.8800);">Yes</div>
<div class="t" style="left:393.00px;top:223.73px;font-size:8px;line-height:9.60px;color:#262626;font-weight:bold;transform:scaleX(0.8800);">16 days</div>
<div class="t" style="left:44.34px;top:234.54px;font-size:7.5px;line-height:9.00px;color:#333;transform:scaleX(0.9500);">12</div>
<svg style="left:82.2px;top:237.34px" width="10" height="7" viewBox="0 0 10 7"><rect x="0" y="0" width="8" height="3.9" rx="0.8" fill="#2f6db4"/><circle cx="7.4" cy="5" r="1.9" fill="#fff"/><path d="M5.6 5H8.6M7.4 3.6L8.9 5L7.4 6.4" stroke="#6a6a6a" stroke-width="1.2" fill="none"/></svg>
<div style="left:112.5px;top:233.64px;width:83.3px;height:11.9px;overflow:hidden">
<div class="t" style="left:35.30px;top:2.03px;font-size:8px;line-height:9.60px;color:#262626;">Develop functional</div>
</div>
<div style="left:196.8px;top:233.64px;width:137px;height:11.9px;overflow:hidden">
<div style="left:1.70px;top:3.8px;width:5px;height:6px;border:1px solid #dedede;border-right-color:#ececec;border-bottom-color:#ececec"></div>
<div class="t" style="left:8.00px;top:2.03px;font-size:8px;line-height:9.60px;color:#262626;transform:scaleX(0.9700);">Bryan,</div>
<div style="left:31.53px;top:3.8px;width:5px;height:6px;border:1px solid #dedede;border-right-color:#ececec;border-bottom-color:#ececec"></div>
<div class="t" style="left:37.83px;top:2.03px;font-size:8px;line-height:9.60px;color:#262626;transform:scaleX(0.9700);">Joseph</div>
</div>
<div class="t" style="left:336.80px;top:235.67px;font-size:8px;line-height:9.60px;color:#262626;transform:scaleX(0.9700);">No</div>
<div class="t" style="left:393.00px;top:235.67px;font-size:8px;line-height:9.60px;color:#262626;transform:scaleX(0.9700);">3 days</div>
<div class="t" style="left:44.34px;top:246.48px;font-size:7.5px;line-height:9.00px;color:#333;transform:scaleX(0.9500);">13</div>
<svg style="left:82.2px;top:249.28px" width="10" height="7" viewBox="0 0 10 7"><rect x="0" y="0" width="8" height="3.9" rx="0.8" fill="#2f6db4"/><circle cx="7.4" cy="5" r="1.9" fill="#fff"/><path d="M5.6 5H8.6M7.4 3.6L8.9 5L7.4 6.4" stroke="#6a6a6a" stroke-width="1.2" fill="none"/></svg>
<div style="left:112.5px;top:245.58px;width:83.3px;height:11.9px;overflow:hidden">
<div class="t" style="left:35.30px;top:2.03px;font-size:8px;line-height:9.60px;color:#262626;">Develop prototype</div>
</div>
<div style="left:196.8px;top:245.58px;width:137px;height:11.9px;overflow:hidden">
<div style="left:1.70px;top:3.8px;width:5px;height:6px;border:1px solid #dedede;border-right-color:#ececec;border-bottom-color:#ececec"></div>
<div class="t" style="left:8.00px;top:2.03px;font-size:8px;line-height:9.60px;color:#262626;transform:scaleX(0.9700);">Susan,</div>
<div style="left:33.26px;top:3.8px;width:5px;height:6px;border:1px solid #dedede;border-right-color:#ececec;border-bottom-color:#ececec"></div>
<div class="t" style="left:39.56px;top:2.03px;font-size:8px;line-height:9.60px;color:#262626;transform:scaleX(0.9700);">Maria</div>
</div>
<div class="t" style="left:336.80px;top:247.61px;font-size:8px;line-height:9.60px;color:#262626;transform:scaleX(0.9700);">Yes</div>
<div class="t" style="left:393.00px;top:247.61px;font-size:8px;line-height:9.60px;color:#262626;transform:scaleX(0.9700);">3 days</div>
<div class="t" style="left:44.34px;top:258.42px;font-size:7.5px;line-height:9.00px;color:#333;transform:scaleX(0.9500);">14</div>
<svg style="left:82.2px;top:261.22px" width="10" height="7" viewBox="0 0 10 7"><rect x="0" y="0" width="8" height="3.9" rx="0.8" fill="#2f6db4"/><circle cx="7.4" cy="5" r="1.9" fill="#fff"/><path d="M5.6 5H8.6M7.4 3.6L8.9 5L7.4 6.4" stroke="#6a6a6a" stroke-width="1.2" fill="none"/></svg>
<div style="left:112.5px;top:257.52px;width:83.3px;height:11.9px;overflow:hidden">
<div class="t" style="left:35.30px;top:2.03px;font-size:8px;line-height:9.60px;color:#262626;">Review functional</div>
</div>
<div style="left:196.8px;top:257.52px;width:137px;height:11.9px;overflow:hidden">
<div style="left:1.70px;top:3.8px;width:5px;height:6px;border:1px solid #dedede;border-right-color:#ececec;border-bottom-color:#ececec"></div>
<div class="t" style="left:8.00px;top:2.03px;font-size:8px;line-height:9.60px;color:#262626;transform:scaleX(0.9700);">John,</div>
<div style="left:28.09px;top:3.8px;width:5px;height:6px;border:1px solid #dedede;border-right-color:#ececec;border-bottom-color:#ececec"></div>
<div class="t" style="left:34.39px;top:2.03px;font-size:8px;line-height:9.60px;color:#262626;transform:scaleX(0.9700);">Lisa,</div>
<div style="left:51.88px;top:3.8px;width:5px;height:6px;border:1px solid #dedede;border-right-color:#ececec;border-bottom-color:#ececec"></div>
<div class="t" style="left:58.18px;top:2.03px;font-size:8px;line-height:9.60px;color:#262626;transform:scaleX(0.9700);">Mark</div>
</div>
<div class="t" style="left:336.80px;top:259.55px;font-size:8px;line-height:9.60px;color:#262626;transform:scaleX(0.9700);">No</div>
<div class="t" style="left:393.00px;top:259.55px;font-size:8px;line-height:9.60px;color:#262626;transform:scaleX(0.9700);">3 days</div>
<div class="t" style="left:44.34px;top:270.36px;font-size:7.5px;line-height:9.00px;color:#333;transform:scaleX(0.9500);">15</div>
<svg style="left:82.2px;top:273.16px" width="10" height="7" viewBox="0 0 10 7"><rect x="0" y="0" width="8" height="3.9" rx="0.8" fill="#2f6db4"/><circle cx="7.4" cy="5" r="1.9" fill="#fff"/><path d="M5.6 5H8.6M7.4 3.6L8.9 5L7.4 6.4" stroke="#6a6a6a" stroke-width="1.2" fill="none"/></svg>
<div style="left:112.5px;top:269.46px;width:83.3px;height:11.9px;overflow:hidden">
<div class="t" style="left:35.30px;top:2.03px;font-size:8px;line-height:9.60px;color:#262626;">Obtain approval</div>
</div>
<div style="left:196.8px;top:269.46px;width:137px;height:11.9px;overflow:hidden">
<div style="left:1.70px;top:3.8px;width:5px;height:6px;border:1px solid #dedede;border-right-color:#ececec;border-bottom-color:#ececec"></div>
<div class="t" style="left:8.00px;top:2.03px;font-size:8px;line-height:9.60px;color:#262626;transform:scaleX(0.9700);">Linda,</div>
<div style="left:30.25px;top:3.8px;width:5px;height:6px;border:1px solid #dedede;border-right-color:#ececec;border-bottom-color:#ececec"></div>
<div class="t" style="left:36.55px;top:2.03px;font-size:8px;line-height:9.60px;color:#262626;transform:scaleX(0.9700);">David,</div>
<div style="left:59.65px;top:3.8px;width:5px;height:6px;border:1px solid #dedede;border-right-color:#ececec;border-bottom-color:#ececec"></div>
<div class="t" style="left:65.95px;top:2.03px;font-size:8px;line-height:9.60px;color:#262626;transform:scaleX(0.9700);">Bryan,</div>
<div style="left:89.48px;top:3.8px;width:5px;height:6px;border:1px solid #dedede;border-right-color:#ececec;border-bottom-color:#ececec"></div>
<div class="t" style="left:95.78px;top:2.03px;font-size:8px;line-height:9.60px;color:#262626;transform:scaleX(0.9700);">Donald,</div>
<div style="left:123.63px;top:3.8px;width:5px;height:6px;border:1px solid #dedede;border-right-color:#ececec;border-bottom-color:#ececec"></div>
<div class="t" style="left:129.93px;top:2.03px;font-size:8px;line-height:9.60px;color:#262626;transform:scaleX(0.9700);">Elizabeth</div>
</div>
<div class="t" style="left:336.80px;top:271.49px;font-size:8px;line-height:9.60px;color:#262626;transform:scaleX(0.9700);">Yes</div>
<div class="t" style="left:393.00px;top:271.49px;font-size:8px;line-height:9.60px;color:#262626;transform:scaleX(0.9700);">2 days</div>
<div class="t" style="left:44.34px;top:282.30px;font-size:7.5px;line-height:9.00px;color:#333;transform:scaleX(0.9500);">16</div>
<svg style="left:82.2px;top:285.10px" width="10" height="7" viewBox="0 0 10 7"><rect x="0" y="0" width="8" height="3.9" rx="0.8" fill="#2f6db4"/><circle cx="7.4" cy="5" r="1.9" fill="#fff"/><path d="M5.6 5H8.6M7.4 3.6L8.9 5L7.4 6.4" stroke="#6a6a6a" stroke-width="1.2" fill="none"/></svg>
<div style="left:112.5px;top:281.40px;width:83.3px;height:11.9px;overflow:hidden">
<div class="t" style="left:35.30px;top:2.03px;font-size:8px;line-height:9.60px;color:#262626;">Design review</div>
</div>
<div style="left:196.8px;top:281.40px;width:137px;height:11.9px;overflow:hidden">
<div style="left:1.70px;top:3.8px;width:5px;height:6px;border:1px solid #dedede;border-right-color:#ececec;border-bottom-color:#ececec"></div>
<div class="t" style="left:8.00px;top:2.03px;font-size:8px;line-height:9.60px;color:#262626;transform:scaleX(0.9700);">John</div>
</div>
<div class="t" style="left:336.80px;top:283.43px;font-size:8px;line-height:9.60px;color:#262626;transform:scaleX(0.9700);">Yes</div>
<div class="t" style="left:393.00px;top:283.43px;font-size:8px;line-height:9.60px;color:#262626;transform:scaleX(0.9700);">2 days</div>
<div class="t" style="left:44.34px;top:294.24px;font-size:7.5px;line-height:9.00px;color:#333;transform:scaleX(0.9500);">17</div>
<svg style="left:82.2px;top:297.04px" width="10" height="7" viewBox="0 0 10 7"><rect x="0" y="0" width="8" height="3.9" rx="0.8" fill="#2f6db4"/><circle cx="7.4" cy="5" r="1.9" fill="#fff"/><path d="M5.6 5H8.6M7.4 3.6L8.9 5L7.4 6.4" stroke="#6a6a6a" stroke-width="1.2" fill="none"/></svg>
<div style="left:112.5px;top:293.34px;width:83.3px;height:11.9px;overflow:hidden">
<div class="t" style="left:35.30px;top:2.03px;font-size:8px;line-height:9.60px;color:#262626;">Review functional</div>
</div>
<div style="left:196.8px;top:293.34px;width:137px;height:11.9px;overflow:hidden">
<div style="left:1.70px;top:3.8px;width:5px;height:6px;border:1px solid #dedede;border-right-color:#ececec;border-bottom-color:#ececec"></div>
<div class="t" style="left:8.00px;top:2.03px;font-size:8px;line-height:9.60px;color:#262626;transform:scaleX(0.9700);">Michael,</div>
<div style="left:38.00px;top:3.8px;width:5px;height:6px;border:1px solid #dedede;border-right-color:#ececec;border-bottom-color:#ececec"></div>
<div class="t" style="left:44.30px;top:2.03px;font-size:8px;line-height:9.60px;color:#262626;transform:scaleX(0.9700);">Maria</div>
</div>
<div class="t" style="left:336.80px;top:295.37px;font-size:8px;line-height:9.60px;color:#262626;transform:scaleX(0.9700);">Yes</div>
<div class="t" style="left:393.00px;top:295.37px;font-size:8px;line-height:9.60px;color:#262626;transform:scaleX(0.9700);">2 days</div>
<div class="t" style="left:44.34px;top:306.18px;font-size:7.5px;line-height:9.00px;color:#333;transform:scaleX(0.9500);">18</div>
<svg style="left:82.2px;top:308.98px" width="10" height="7" viewBox="0 0 10 7"><rect x="0" y="0" width="8" height="3.9" rx="0.8" fill="#2f6db4"/><circle cx="7.4" cy="5" r="1.9" fill="#fff"/><path d="M5.6 5H8.6M7.4 3.6L8.9 5L7.4 6.4" stroke="#6a6a6a" stroke-width="1.2" fill="none"/></svg>
<div style="left:112.5px;top:305.28px;width:83.3px;height:11.9px;overflow:hidden">
<div class="t" style="left:35.30px;top:2.03px;font-size:8px;line-height:9.60px;color:#262626;">Assign Developers</div>
</div>
<div style="left:196.8px;top:305.28px;width:137px;height:11.9px;overflow:hidden">
<div style="left:1.70px;top:3.8px;width:5px;height:6px;border:1px solid #dedede;border-right-color:#ececec;border-bottom-color:#ececec"></div>
<div class="t" style="left:8.00px;top:2.03px;font-size:8px;line-height:9.60px;color:#262626;transform:scaleX(0.9700);">James</div>
</div>
<div class="t" style="left:336.80px;top:307.31px;font-size:8px;line-height:9.60px;color:#262626;transform:scaleX(0.9700);">No</div>
<div class="t" style="left:393.00px;top:307.31px;font-size:8px;line-height:9.60px;color:#262626;transform:scaleX(0.9700);">1 day</div>
<div class="t" style="left:44.34px;top:318.12px;font-size:7.5px;line-height:9.00px;color:#333;transform:scaleX(0.9500);">19</div>
<svg style="left:82.2px;top:320.92px" width="10" height="7" viewBox="0 0 10 7"><rect x="0" y="0" width="8" height="3.9" rx="0.8" fill="#2f6db4"/><circle cx="7.4" cy="5" r="1.9" fill="#fff"/><path d="M5.6 5H8.6M7.4 3.6L8.9 5L7.4 6.4" stroke="#6a6a6a" stroke-width="1.2" fill="none"/></svg>
<div style="left:112.5px;top:317.22px;width:83.3px;height:11.9px;overflow:hidden">
<div class="t" style="left:35.30px;top:2.03px;font-size:8px;line-height:9.60px;color:#262626;">Develop code</div>
</div>
<div style="left:196.8px;top:317.22px;width:137px;height:11.9px;overflow:hidden">
<div style="left:1.70px;top:3.8px;width:5px;height:6px;border:1px solid #dedede;border-right-color:#ececec;border-bottom-color:#ececec"></div>
<div class="t" style="left:8.00px;top:2.03px;font-size:8px;line-height:9.60px;color:#262626;transform:scaleX(0.9700);">Elizabeth</div>
</div>
<div class="t" style="left:336.80px;top:319.25px;font-size:8px;line-height:9.60px;color:#262626;transform:scaleX(0.9700);">Yes</div>
<div class="t" style="left:393.00px;top:319.25px;font-size:8px;line-height:9.60px;color:#262626;transform:scaleX(0.9700);">3 days</div>
<div class="t" style="left:44.34px;top:330.06px;font-size:7.5px;line-height:9.00px;color:#333;transform:scaleX(0.9500);">20</div>
<svg style="left:82.2px;top:332.86px" width="10" height="7" viewBox="0 0 10 7"><rect x="0" y="0" width="8" height="3.9" rx="0.8" fill="#2f6db4"/><circle cx="7.4" cy="5" r="1.9" fill="#fff"/><path d="M5.6 5H8.6M7.4 3.6L8.9 5L7.4 6.4" stroke="#6a6a6a" stroke-width="1.2" fill="none"/></svg>
<div style="left:112.5px;top:329.16px;width:83.3px;height:11.9px;overflow:hidden">
<div class="t" style="left:35.30px;top:2.03px;font-size:8px;line-height:9.60px;color:#262626;">Development testing</div>
</div>
<div style="left:196.8px;top:329.16px;width:137px;height:11.9px;overflow:hidden">
<div style="left:1.70px;top:3.8px;width:5px;height:6px;border:1px solid #dedede;border-right-color:#ececec;border-bottom-color:#ececec"></div>
<div class="t" style="left:8.00px;top:2.03px;font-size:8px;line-height:9.60px;color:#262626;transform:scaleX(0.9700);">Donald</div>
</div>
<div class="t" style="left:336.80px;top:331.19px;font-size:8px;line-height:9.60px;color:#262626;transform:scaleX(0.9700);">No</div>
<div class="t" style="left:393.00px;top:331.19px;font-size:8px;line-height:9.60px;color:#262626;transform:scaleX(0.9700);">5 days</div>
<div class="t" style="left:44.34px;top:342.00px;font-size:7.5px;line-height:9.00px;color:#333;transform:scaleX(0.9500);">21</div>
<svg style="left:82.2px;top:344.80px" width="10" height="7" viewBox="0 0 10 7"><rect x="0" y="0" width="8" height="3.9" rx="0.8" fill="#2f6db4"/><circle cx="7.4" cy="5" r="1.9" fill="#fff"/><path d="M5.6 5H8.6M7.4 3.6L8.9 5L7.4 6.4" stroke="#6a6a6a" stroke-width="1.2" fill="none"/></svg>
<div style="left:112.5px;top:341.10px;width:83.3px;height:11.9px;overflow:hidden">
<div class="t" style="left:35.30px;top:2.03px;font-size:8px;line-height:9.60px;color:#262626;">Develop unit</div>
</div>
<div style="left:196.8px;top:341.10px;width:137px;height:11.9px;overflow:hidden">
<div style="left:1.70px;top:3.8px;width:5px;height:6px;border:1px solid #dedede;border-right-color:#ececec;border-bottom-color:#ececec"></div>
<div class="t" style="left:8.00px;top:2.03px;font-size:8px;line-height:9.60px;color:#262626;transform:scaleX(0.9700);">Mary</div>
</div>
<div class="t" style="left:336.80px;top:343.13px;font-size:8px;line-height:9.60px;color:#262626;transform:scaleX(0.9700);">Yes</div>
<div class="t" style="left:393.00px;top:343.13px;font-size:8px;line-height:9.60px;color:#262626;transform:scaleX(0.9700);">4 days</div>
<div class="t" style="left:44.34px;top:353.94px;font-size:7.5px;line-height:9.00px;color:#333;transform:scaleX(0.9500);">22</div>
<svg style="left:82.2px;top:356.74px" width="10" height="7" viewBox="0 0 10 7"><rect x="0" y="0" width="8" height="3.9" rx="0.8" fill="#2f6db4"/><circle cx="7.4" cy="5" r="1.9" fill="#fff"/><path d="M5.6 5H8.6M7.4 3.6L8.9 5L7.4 6.4" stroke="#6a6a6a" stroke-width="1.2" fill="none"/></svg>
<div style="left:112.5px;top:353.04px;width:83.3px;height:11.9px;overflow:hidden">
<div class="t" style="left:35.30px;top:2.03px;font-size:8px;line-height:9.60px;color:#262626;">Develop testing</div>
</div>
<div style="left:196.8px;top:353.04px;width:137px;height:11.9px;overflow:hidden">
<div style="left:1.70px;top:3.8px;width:5px;height:6px;border:1px solid #dedede;border-right-color:#ececec;border-bottom-color:#ececec"></div>
<div class="t" style="left:8.00px;top:2.03px;font-size:8px;line-height:9.60px;color:#262626;transform:scaleX(0.9700);">Joseph</div>
</div>
<div class="t" style="left:336.80px;top:355.07px;font-size:8px;line-height:9.60px;color:#262626;transform:scaleX(0.9700);">No</div>
<div class="t" style="left:393.00px;top:355.07px;font-size:8px;line-height:9.60px;color:#262626;transform:scaleX(0.9700);">3 days</div>
<div class="t" style="left:44.34px;top:365.88px;font-size:7.5px;line-height:9.00px;color:#333;transform:scaleX(0.9500);">23</div>
<svg style="left:82.2px;top:368.68px" width="10" height="7" viewBox="0 0 10 7"><rect x="0" y="0" width="8" height="3.9" rx="0.8" fill="#2f6db4"/><circle cx="7.4" cy="5" r="1.9" fill="#fff"/><path d="M5.6 5H8.6M7.4 3.6L8.9 5L7.4 6.4" stroke="#6a6a6a" stroke-width="1.2" fill="none"/></svg>
<svg style="left:127.5px;top:367.68px" width="6" height="6" viewBox="0 0 6 6"><rect x="0.5" y="0.5" width="5.2" height="5.2" fill="#fff" stroke="#6a6a6a" stroke-width="0.9"/><path d="M1.5 3.1H4.7" stroke="#333" stroke-width="0.9"/></svg>
<div style="left:112.5px;top:364.98px;width:83.3px;height:11.9px;overflow:hidden">
<div class="t" style="left:22.80px;top:2.03px;font-size:8px;line-height:9.60px;color:#262626;font-weight:bold;transform:scaleX(0.8800);">Summary Task 1</div>
</div>
<div class="t" style="left:336.80px;top:367.01px;font-size:8px;line-height:9.60px;color:#262626;font-weight:bold;transform:scaleX(0.8800);">Yes</div>
<div class="t" style="left:393.00px;top:367.01px;font-size:8px;line-height:9.60px;color:#262626;font-weight:bold;transform:scaleX(0.8800);">12 days?</div>
<div class="t" style="left:44.34px;top:377.82px;font-size:7.5px;line-height:9.00px;color:#333;transform:scaleX(0.9500);">24</div>
<svg style="left:82.2px;top:380.62px" width="10" height="7" viewBox="0 0 10 7"><rect x="0" y="0" width="8" height="3.9" rx="0.8" fill="#2f6db4"/><circle cx="7.4" cy="5" r="1.9" fill="#fff"/><path d="M5.6 5H8.6M7.4 3.6L8.9 5L7.4 6.4" stroke="#6a6a6a" stroke-width="1.2" fill="none"/></svg>
<div style="left:112.5px;top:376.92px;width:83.3px;height:11.9px;overflow:hidden">
<div class="t" style="left:35.30px;top:2.03px;font-size:8px;line-height:9.60px;color:#262626;">Identify test group</div>
</div>
<div style="left:196.8px;top:376.92px;width:137px;height:11.9px;overflow:hidden">
<div style="left:1.70px;top:3.8px;width:5px;height:6px;border:1px solid #dedede;border-right-color:#ececec;border-bottom-color:#ececec"></div>
<div class="t" style="left:8.00px;top:2.03px;font-size:8px;line-height:9.60px;color:#262626;transform:scaleX(0.9700);">Bryan,</div>
<div style="left:31.53px;top:3.8px;width:5px;height:6px;border:1px solid #dedede;border-right-color:#ececec;border-bottom-color:#ececec"></div>
<div class="t" style="left:37.83px;top:2.03px;font-size:8px;line-height:9.60px;color:#262626;transform:scaleX(0.9700);">Joseph</div>
</div>
<div class="t" style="left:336.80px;top:378.95px;font-size:8px;line-height:9.60px;color:#262626;transform:scaleX(0.9700);">No</div>
<div class="t" style="left:393.00px;top:378.95px;font-size:8px;line-height:9.60px;color:#262626;transform:scaleX(0.9700);">1 day?</div>
<div class="t" style="left:44.34px;top:389.76px;font-size:7.5px;line-height:9.00px;color:#333;transform:scaleX(0.9500);">25</div>
<svg style="left:82.2px;top:392.56px" width="10" height="7" viewBox="0 0 10 7"><rect x="0" y="0" width="8" height="3.9" rx="0.8" fill="#2f6db4"/><circle cx="7.4" cy="5" r="1.9" fill="#fff"/><path d="M5.6 5H8.6M7.4 3.6L8.9 5L7.4 6.4" stroke="#6a6a6a" stroke-width="1.2" fill="none"/></svg>
<div style="left:112.5px;top:388.86px;width:83.3px;height:11.9px;overflow:hidden">
<div class="t" style="left:35.30px;top:2.03px;font-size:8px;line-height:9.60px;color:#262626;">Develop software</div>
</div>
<div style="left:196.8px;top:388.86px;width:137px;height:11.9px;overflow:hidden">
<div style="left:1.70px;top:3.8px;width:5px;height:6px;border:1px solid #dedede;border-right-color:#ececec;border-bottom-color:#ececec"></div>
<div class="t" style="left:8.00px;top:2.03px;font-size:8px;line-height:9.60px;color:#262626;transform:scaleX(0.9700);">Susan,</div>
<div style="left:33.26px;top:3.8px;width:5px;height:6px;border:1px solid #dedede;border-right-color:#ececec;border-bottom-color:#ececec"></div>
<div class="t" style="left:39.56px;top:2.03px;font-size:8px;line-height:9.60px;color:#262626;transform:scaleX(0.9700);">Maria</div>
</div>
<div class="t" style="left:336.80px;top:390.89px;font-size:8px;line-height:9.60px;color:#262626;transform:scaleX(0.9700);">Yes</div>
<div class="t" style="left:393.00px;top:390.89px;font-size:8px;line-height:9.60px;color:#262626;transform:scaleX(0.9700);">2 days</div>
<div class="t" style="left:44.34px;top:401.70px;font-size:7.5px;line-height:9.00px;color:#333;transform:scaleX(0.9500);">26</div>
<svg style="left:82.2px;top:404.50px" width="10" height="7" viewBox="0 0 10 7"><rect x="0" y="0" width="8" height="3.9" rx="0.8" fill="#2f6db4"/><circle cx="7.4" cy="5" r="1.9" fill="#fff"/><path d="M5.6 5H8.6M7.4 3.6L8.9 5L7.4 6.4" stroke="#6a6a6a" stroke-width="1.2" fill="none"/></svg>
<div style="left:112.5px;top:400.80px;width:83.3px;height:11.9px;overflow:hidden">
<div class="t" style="left:35.30px;top:2.03px;font-size:8px;line-height:9.60px;color:#262626;">Install/deply software</div>
</div>
<div style="left:196.8px;top:400.80px;width:137px;height:11.9px;overflow:hidden">
<div style="left:1.70px;top:3.8px;width:5px;height:6px;border:1px solid #dedede;border-right-color:#ececec;border-bottom-color:#ececec"></div>
<div class="t" style="left:8.00px;top:2.03px;font-size:8px;line-height:9.60px;color:#262626;transform:scaleX(0.9700);">John,</div>
<div style="left:28.09px;top:3.8px;width:5px;height:6px;border:1px solid #dedede;border-right-color:#ececec;border-bottom-color:#ececec"></div>
<div class="t" style="left:34.39px;top:2.03px;font-size:8px;line-height:9.60px;color:#262626;transform:scaleX(0.9700);">Lisa,</div>
<div style="left:51.88px;top:3.8px;width:5px;height:6px;border:1px solid #dedede;border-right-color:#ececec;border-bottom-color:#ececec"></div>
<div class="t" style="left:58.18px;top:2.03px;font-size:8px;line-height:9.60px;color:#262626;transform:scaleX(0.9700);">Mark</div>
</div>
<div class="t" style="left:336.80px;top:402.83px;font-size:8px;line-height:9.60px;color:#262626;transform:scaleX(0.9700);">No</div>
<div class="t" style="left:393.00px;top:402.83px;font-size:8px;line-height:9.60px;color:#262626;transform:scaleX(0.9700);">2 days</div>
<div class="t" style="left:44.34px;top:413.64px;font-size:7.5px;line-height:9.00px;color:#333;transform:scaleX(0.9500);">27</div>
<svg style="left:82.2px;top:416.44px" width="10" height="7" viewBox="0 0 10 7"><rect x="0" y="0" width="8" height="3.9" rx="0.8" fill="#2f6db4"/><circle cx="7.4" cy="5" r="1.9" fill="#fff"/><path d="M5.6 5H8.6M7.4 3.6L8.9 5L7.4 6.4" stroke="#6a6a6a" stroke-width="1.2" fill="none"/></svg>
<div style="left:112.5px;top:412.74px;width:83.3px;height:11.9px;overflow:hidden">
<div class="t" style="left:35.30px;top:2.03px;font-size:8px;line-height:9.60px;color:#262626;">Obtain user feedback</div>
</div>
<div style="left:196.8px;top:412.74px;width:137px;height:11.9px;overflow:hidden">
<div style="left:1.70px;top:3.8px;width:5px;height:6px;border:1px solid #dedede;border-right-color:#ececec;border-bottom-color:#ececec"></div>
<div class="t" style="left:8.00px;top:2.03px;font-size:8px;line-height:9.60px;color:#262626;transform:scaleX(0.9700);">Linda,</div>
<div style="left:30.25px;top:3.8px;width:5px;height:6px;border:1px solid #dedede;border-right-color:#ececec;border-bottom-color:#ececec"></div>
<div class="t" style="left:36.55px;top:2.03px;font-size:8px;line-height:9.60px;color:#262626;transform:scaleX(0.9700);">David,</div>
<div style="left:59.65px;top:3.8px;width:5px;height:6px;border:1px solid #dedede;border-right-color:#ececec;border-bottom-color:#ececec"></div>
<div class="t" style="left:65.95px;top:2.03px;font-size:8px;line-height:9.60px;color:#262626;transform:scaleX(0.9700);">Bryan,</div>
<div style="left:89.48px;top:3.8px;width:5px;height:6px;border:1px solid #dedede;border-right-color:#ececec;border-bottom-color:#ececec"></div>
<div class="t" style="left:95.78px;top:2.03px;font-size:8px;line-height:9.60px;color:#262626;transform:scaleX(0.9700);">Donald,</div>
<div style="left:123.63px;top:3.8px;width:5px;height:6px;border:1px solid #dedede;border-right-color:#ececec;border-bottom-color:#ececec"></div>
<div class="t" style="left:129.93px;top:2.03px;font-size:8px;line-height:9.60px;color:#262626;transform:scaleX(0.9700);">Elizabeth</div>
</div>
<div class="t" style="left:336.80px;top:414.77px;font-size:8px;line-height:9.60px;color:#262626;transform:scaleX(0.9700);">Yes</div>
<div class="t" style="left:393.00px;top:414.77px;font-size:8px;line-height:9.60px;color:#262626;transform:scaleX(0.9700);">2 days</div>
<div class="t" style="left:44.34px;top:425.58px;font-size:7.5px;line-height:9.00px;color:#333;transform:scaleX(0.9500);">28</div>
<svg style="left:82.2px;top:428.38px" width="10" height="7" viewBox="0 0 10 7"><rect x="0" y="0" width="8" height="3.9" rx="0.8" fill="#2f6db4"/><circle cx="7.4" cy="5" r="1.9" fill="#fff"/><path d="M5.6 5H8.6M7.4 3.6L8.9 5L7.4 6.4" stroke="#6a6a6a" stroke-width="1.2" fill="none"/></svg>
<div style="left:112.5px;top:424.68px;width:83.3px;height:11.9px;overflow:hidden">
<div class="t" style="left:35.30px;top:2.03px;font-size:8px;line-height:9.60px;color:#262626;">Evaluate testing</div>
</div>
<div style="left:196.8px;top:424.68px;width:137px;height:11.9px;overflow:hidden">
<div style="left:1.70px;top:3.8px;width:5px;height:6px;border:1px solid #dedede;border-right-color:#ececec;border-bottom-color:#ececec"></div>
<div class="t" style="left:8.00px;top:2.03px;font-size:8px;line-height:9.60px;color:#262626;transform:scaleX(0.9700);">John</div>
</div>
<div class="t" style="left:336.80px;top:426.71px;font-size:8px;line-height:9.60px;color:#262626;transform:scaleX(0.9700);">Yes</div>
<div class="t" style="left:393.00px;top:426.71px;font-size:8px;line-height:9.60px;color:#262626;transform:scaleX(0.9700);">3 days</div>
<div class="t" style="left:44.34px;top:437.52px;font-size:7.5px;line-height:9.00px;color:#333;transform:scaleX(0.9500);">29</div>
<svg style="left:82.2px;top:440.32px" width="10" height="7" viewBox="0 0 10 7"><rect x="0" y="0" width="8" height="3.9" rx="0.8" fill="#2f6db4"/><circle cx="7.4" cy="5" r="1.9" fill="#fff"/><path d="M5.6 5H8.6M7.4 3.6L8.9 5L7.4 6.4" stroke="#6a6a6a" stroke-width="1.2" fill="none"/></svg>
<div style="left:112.5px;top:436.62px;width:83.3px;height:11.9px;overflow:hidden">
<div class="t" style="left:35.30px;top:2.03px;font-size:8px;line-height:9.60px;color:#262626;">Pilot review</div>
</div>
<div style="left:196.8px;top:436.62px;width:137px;height:11.9px;overflow:hidden">
<div style="left:1.70px;top:3.8px;width:5px;height:6px;border:1px solid #dedede;border-right-color:#ececec;border-bottom-color:#ececec"></div>
<div class="t" style="left:8.00px;top:2.03px;font-size:8px;line-height:9.60px;color:#262626;transform:scaleX(0.9700);">Michael,</div>
<div style="left:38.00px;top:3.8px;width:5px;height:6px;border:1px solid #dedede;border-right-color:#ececec;border-bottom-color:#ececec"></div>
<div class="t" style="left:44.30px;top:2.03px;font-size:8px;line-height:9.60px;color:#262626;transform:scaleX(0.9700);">Maria</div>
</div>
<div class="t" style="left:336.80px;top:438.65px;font-size:8px;line-height:9.60px;color:#262626;transform:scaleX(0.9700);">Yes</div>
<div class="t" style="left:393.00px;top:438.65px;font-size:8px;line-height:9.60px;color:#262626;transform:scaleX(0.9700);">1 day</div>
<div class="t" style="left:44.34px;top:449.46px;font-size:7.5px;line-height:9.00px;color:#333;transform:scaleX(0.9500);">30</div>
<svg style="left:82.2px;top:452.26px" width="10" height="7" viewBox="0 0 10 7"><rect x="0" y="0" width="8" height="3.9" rx="0.8" fill="#2f6db4"/><circle cx="7.4" cy="5" r="1.9" fill="#fff"/><path d="M5.6 5H8.6M7.4 3.6L8.9 5L7.4 6.4" stroke="#6a6a6a" stroke-width="1.2" fill="none"/></svg>
<div style="left:112.5px;top:448.56px;width:83.3px;height:11.9px;overflow:hidden">
<div class="t" style="left:35.30px;top:2.03px;font-size:8px;line-height:9.60px;color:#262626;">Document lessons</div>
</div>
<div style="left:196.8px;top:448.56px;width:137px;height:11.9px;overflow:hidden">
<div style="left:1.70px;top:3.8px;width:5px;height:6px;border:1px solid #dedede;border-right-color:#ececec;border-bottom-color:#ececec"></div>
<div class="t" style="left:8.00px;top:2.03px;font-size:8px;line-height:9.60px;color:#262626;transform:scaleX(0.9700);">James</div>
</div>
<div class="t" style="left:336.80px;top:450.59px;font-size:8px;line-height:9.60px;color:#262626;transform:scaleX(0.9700);">No</div>
<div class="t" style="left:393.00px;top:450.59px;font-size:8px;line-height:9.60px;color:#262626;transform:scaleX(0.9700);">2 days</div>
<div class="t" style="left:44.34px;top:461.40px;font-size:7.5px;line-height:9.00px;color:#333;transform:scaleX(0.9500);">31</div>
<svg style="left:82.2px;top:464.20px" width="10" height="7" viewBox="0 0 10 7"><rect x="0" y="0" width="8" height="3.9" rx="0.8" fill="#2f6db4"/><circle cx="7.4" cy="5" r="1.9" fill="#fff"/><path d="M5.6 5H8.6M7.4 3.6L8.9 5L7.4 6.4" stroke="#6a6a6a" stroke-width="1.2" fill="none"/></svg>
<div style="left:112.5px;top:460.50px;width:83.3px;height:11.9px;overflow:hidden">
<div class="t" style="left:35.30px;top:2.03px;font-size:8px;line-height:9.60px;color:#262626;">Distribute to team</div>
</div>
<div style="left:196.8px;top:460.50px;width:137px;height:11.9px;overflow:hidden">
<div style="left:1.70px;top:3.8px;width:5px;height:6px;border:1px solid #dedede;border-right-color:#ececec;border-bottom-color:#ececec"></div>
<div class="t" style="left:8.00px;top:2.03px;font-size:8px;line-height:9.60px;color:#262626;transform:scaleX(0.9700);">Elizabeth</div>
</div>
<div class="t" style="left:336.80px;top:462.53px;font-size:8px;line-height:9.60px;color:#262626;transform:scaleX(0.9700);">Yes</div>
<div class="t" style="left:393.00px;top:462.53px;font-size:8px;line-height:9.60px;color:#262626;transform:scaleX(0.9700);">2 days</div>
<div class="t" style="left:44.34px;top:473.34px;font-size:7.5px;line-height:9.00px;color:#333;transform:scaleX(0.9500);">32</div>
<svg style="left:82.2px;top:476.14px" width="10" height="7" viewBox="0 0 10 7"><rect x="0" y="0" width="8" height="3.9" rx="0.8" fill="#2f6db4"/><circle cx="7.4" cy="5" r="1.9" fill="#fff"/><path d="M5.6 5H8.6M7.4 3.6L8.9 5L7.4 6.4" stroke="#6a6a6a" stroke-width="1.2" fill="none"/></svg>
<div style="left:112.5px;top:472.44px;width:83.3px;height:11.9px;overflow:hidden">
<div class="t" style="left:35.30px;top:2.03px;font-size:8px;line-height:9.60px;color:#262626;">Create software</div>
</div>
<div style="left:196.8px;top:472.44px;width:137px;height:11.9px;overflow:hidden">
<div style="left:1.70px;top:3.8px;width:5px;height:6px;border:1px solid #dedede;border-right-color:#ececec;border-bottom-color:#ececec"></div>
<div class="t" style="left:8.00px;top:2.03px;font-size:8px;line-height:9.60px;color:#262626;transform:scaleX(0.9700);">Donald</div>
</div>
<div class="t" style="left:336.80px;top:474.47px;font-size:8px;line-height:9.60px;color:#262626;transform:scaleX(0.9700);">No</div>
<div class="t" style="left:393.00px;top:474.47px;font-size:8px;line-height:9.60px;color:#262626;transform:scaleX(0.9700);">2 days</div>
<div class="t" style="left:44.34px;top:485.28px;font-size:7.5px;line-height:9.00px;color:#333;transform:scaleX(0.9500);">33</div>
<svg style="left:82.2px;top:488.08px" width="10" height="7" viewBox="0 0 10 7"><rect x="0" y="0" width="8" height="3.9" rx="0.8" fill="#2f6db4"/><circle cx="7.4" cy="5" r="1.9" fill="#fff"/><path d="M5.6 5H8.6M7.4 3.6L8.9 5L7.4 6.4" stroke="#6a6a6a" stroke-width="1.2" fill="none"/></svg>
<div style="left:112.5px;top:484.38px;width:83.3px;height:11.9px;overflow:hidden">
<div class="t" style="left:35.30px;top:2.03px;font-size:8px;line-height:9.60px;color:#262626;">Software templates</div>
</div>
<div style="left:196.8px;top:484.38px;width:137px;height:11.9px;overflow:hidden">
<div style="left:1.70px;top:3.8px;width:5px;height:6px;border:1px solid #dedede;border-right-color:#ececec;border-bottom-color:#ececec"></div>
<div class="t" style="left:8.00px;top:2.03px;font-size:8px;line-height:9.60px;color:#262626;transform:scaleX(0.9700);">Mary</div>
</div>
<div class="t" style="left:336.80px;top:486.41px;font-size:8px;line-height:9.60px;color:#262626;transform:scaleX(0.9700);">Yes</div>
<div class="t" style="left:393.00px;top:486.41px;font-size:8px;line-height:9.60px;color:#262626;transform:scaleX(0.9700);">2 days</div>
<div class="t" style="left:44.34px;top:497.22px;font-size:7.5px;line-height:9.00px;color:#333;transform:scaleX(0.9500);">34</div>
<svg style="left:82.2px;top:500.02px" width="10" height="7" viewBox="0 0 10 7"><rect x="0" y="0" width="8" height="3.9" rx="0.8" fill="#2f6db4"/><circle cx="7.4" cy="5" r="1.9" fill="#fff"/><path d="M5.6 5H8.6M7.4 3.6L8.9 5L7.4 6.4" stroke="#6a6a6a" stroke-width="1.2" fill="none"/></svg>
<div style="left:112.5px;top:496.32px;width:83.3px;height:11.9px;overflow:hidden">
<div class="t" style="left:35.30px;top:2.03px;font-size:8px;line-height:9.60px;color:#262626;">Finish</div>
</div>
<div style="left:196.8px;top:496.32px;width:137px;height:11.9px;overflow:hidden">
<div style="left:1.70px;top:3.8px;width:5px;height:6px;border:1px solid #dedede;border-right-color:#ececec;border-bottom-color:#ececec"></div>
<div class="t" style="left:8.00px;top:2.03px;font-size:8px;line-height:9.60px;color:#262626;transform:scaleX(0.9700);">Joseph</div>
</div>
<div class="t" style="left:336.80px;top:498.35px;font-size:8px;line-height:9.60px;color:#262626;transform:scaleX(0.9700);">No</div>
<div class="t" style="left:393.00px;top:498.35px;font-size:8px;line-height:9.60px;color:#262626;transform:scaleX(0.9700);">2 days</div>
<div style="left:112.8px;top:102.5px;width:84.2px;height:12.6px;border:2px solid #2e2e2e"></div>
<div style="left:432.5px;top:84px;width:3.5px;height:478px;background:linear-gradient(90deg,#fafafa,#ececec)"></div>
<div style="left:436px;top:84px;width:1px;height:478px;background:#c4c4c4"></div>
<div style="left:38px;top:553.5px;width:395px;height:8.5px;background:#f0f0f0"></div>
<div style="left:48px;top:553.5px;width:215px;height:8.5px;background:#cacaca"></div>
<svg style="left:40.5px;top:555.5px" width="4" height="5"><path d="M3.5 0.3L0.8 2.5L3.5 4.7" stroke="#555" stroke-width="1" fill="none"/></svg>
<svg style="left:426.5px;top:555.5px" width="4" height="5"><path d="M0.5 0.3L3.2 2.5L0.5 4.7" stroke="#555" stroke-width="1" fill="none"/></svg>
<div style="left:437px;top:84px;width:319.5px;height:2px;background:#cdcdcf"></div>
<div style="left:437px;top:86px;width:319.5px;height:17px;background:#f9f9f9"></div>
<div style="left:437px;top:84px;width:319.5px;height:20px;overflow:hidden">
<div style="left:-51.50px;top:2px;width:2px;height:8px;background:#d2d2d2"></div>
<div style="left:20.25px;top:2px;width:2px;height:8px;background:#d2d2d2"></div>
<div class="t" style="left:23.50px;top:0.90px;font-size:7.5px;line-height:9.00px;color:#333;transform:scaleX(0.9400);">Mar 5, '17</div>
<div style="left:92.00px;top:2px;width:2px;height:8px;background:#d2d2d2"></div>
<div class="t" style="left:95.25px;top:0.90px;font-size:7.5px;line-height:9.00px;color:#333;transform:scaleX(0.9400);">Mar 12, '17</div>
<div style="left:163.75px;top:2px;width:2px;height:8px;background:#d2d2d2"></div>
<div class="t" style="left:167.00px;top:0.90px;font-size:7.5px;line-height:9.00px;color:#333;transform:scaleX(0.9400);">Mar 19, '17</div>
<div style="left:235.50px;top:2px;width:2px;height:8px;background:#d2d2d2"></div>
<div class="t" style="left:238.75px;top:0.90px;font-size:7.5px;line-height:9.00px;color:#333;transform:scaleX(0.9400);">Mar 26, '17</div>
<div style="left:307.25px;top:2px;width:2px;height:8px;background:#d2d2d2"></div>
<div class="t" style="left:310.50px;top:0.90px;font-size:7.5px;line-height:9.00px;color:#333;transform:scaleX(0.9400);">Apr 2, '17</div>
<div style="left:0;top:9px;width:319.5px;height:1.5px;background:#d0d0d0"></div>
<div style="left:-0.25px;top:10px;width:2px;height:9px;background:#d2d2d2"></div>
<div class="t" style="left:3.48px;top:9.77px;font-size:7px;line-height:8.40px;color:#333;transform:scaleX(0.9000);">F</div>
<div style="left:10.00px;top:10px;width:2px;height:9px;background:#d2d2d2"></div>
<div class="t" style="left:13.55px;top:9.77px;font-size:7px;line-height:8.40px;color:#333;transform:scaleX(0.9000);">S</div>
<div style="left:20.25px;top:10px;width:2px;height:9px;background:#d2d2d2"></div>
<div class="t" style="left:23.80px;top:9.77px;font-size:7px;line-height:8.40px;color:#333;transform:scaleX(0.9000);">S</div>
<div style="left:30.50px;top:10px;width:2px;height:9px;background:#d2d2d2"></div>
<div class="t" style="left:33.53px;top:9.77px;font-size:7px;line-height:8.40px;color:#333;transform:scaleX(0.9000);">M</div>
<div style="left:40.75px;top:10px;width:2px;height:9px;background:#d2d2d2"></div>
<div class="t" style="left:44.48px;top:9.77px;font-size:7px;line-height:8.40px;color:#333;transform:scaleX(0.9000);">T</div>
<div style="left:51.00px;top:10px;width:2px;height:9px;background:#d2d2d2"></div>
<div class="t" style="left:53.68px;top:9.77px;font-size:7px;line-height:8.40px;color:#333;transform:scaleX(0.9000);">W</div>
<div style="left:61.25px;top:10px;width:2px;height:9px;background:#d2d2d2"></div>
<div class="t" style="left:64.98px;top:9.77px;font-size:7px;line-height:8.40px;color:#333;transform:scaleX(0.9000);">T</div>
<div style="left:71.50px;top:10px;width:2px;height:9px;background:#d2d2d2"></div>
<div class="t" style="left:75.23px;top:9.77px;font-size:7px;line-height:8.40px;color:#333;transform:scaleX(0.9000);">F</div>
<div style="left:81.75px;top:10px;width:2px;height:9px;background:#d2d2d2"></div>
<div class="t" style="left:85.30px;top:9.77px;font-size:7px;line-height:8.40px;color:#333;transform:scaleX(0.9000);">S</div>
<div style="left:92.00px;top:10px;width:2px;height:9px;background:#d2d2d2"></div>
<div class="t" style="left:95.55px;top:9.77px;font-size:7px;line-height:8.40px;color:#333;transform:scaleX(0.9000);">S</div>
<div style="left:102.25px;top:10px;width:2px;height:9px;background:#d2d2d2"></div>
<div class="t" style="left:105.28px;top:9.77px;font-size:7px;line-height:8.40px;color:#333;transform:scaleX(0.9000);">M</div>
<div style="left:112.50px;top:10px;width:2px;height:9px;background:#d2d2d2"></div>
<div class="t" style="left:116.23px;top:9.77px;font-size:7px;line-height:8.40px;color:#333;transform:scaleX(0.9000);">T</div>
<div style="left:122.75px;top:10px;width:2px;height:9px;background:#d2d2d2"></div>
<div class="t" style="left:125.43px;top:9.77px;font-size:7px;line-height:8.40px;color:#333;transform:scaleX(0.9000);">W</div>
<div style="left:133.00px;top:10px;width:2px;height:9px;background:#d2d2d2"></div>
<div class="t" style="left:136.73px;top:9.77px;font-size:7px;line-height:8.40px;color:#333;transform:scaleX(0.9000);">T</div>
<div style="left:143.25px;top:10px;width:2px;height:9px;background:#d2d2d2"></div>
<div class="t" style="left:146.98px;top:9.77px;font-size:7px;line-height:8.40px;color:#333;transform:scaleX(0.9000);">F</div>
<div style="left:153.50px;top:10px;width:2px;height:9px;background:#d2d2d2"></div>
<div class="t" style="left:157.05px;top:9.77px;font-size:7px;line-height:8.40px;color:#333;transform:scaleX(0.9000);">S</div>
<div style="left:163.75px;top:10px;width:2px;height:9px;background:#d2d2d2"></div>
<div class="t" style="left:167.30px;top:9.77px;font-size:7px;line-height:8.40px;color:#333;transform:scaleX(0.9000);">S</div>
<div style="left:174.00px;top:10px;width:2px;height:9px;background:#d2d2d2"></div>
<div class="t" style="left:177.03px;top:9.77px;font-size:7px;line-height:8.40px;color:#333;transform:scaleX(0.9000);">M</div>
<div style="left:184.25px;top:10px;width:2px;height:9px;background:#d2d2d2"></div>
<div class="t" style="left:187.98px;top:9.77px;font-size:7px;line-height:8.40px;color:#333;transform:scaleX(0.9000);">T</div>
<div style="left:194.50px;top:10px;width:2px;height:9px;background:#d2d2d2"></div>
<div class="t" style="left:197.18px;top:9.77px;font-size:7px;line-height:8.40px;color:#333;transform:scaleX(0.9000);">W</div>
<div style="left:204.75px;top:10px;width:2px;height:9px;background:#d2d2d2"></div>
<div class="t" style="left:208.48px;top:9.77px;font-size:7px;line-height:8.40px;color:#333;transform:scaleX(0.9000);">T</div>
<div style="left:215.00px;top:10px;width:2px;height:9px;background:#d2d2d2"></div>
<div class="t" style="left:218.73px;top:9.77px;font-size:7px;line-height:8.40px;color:#333;transform:scaleX(0.9000);">F</div>
<div style="left:225.25px;top:10px;width:2px;height:9px;background:#d2d2d2"></div>
<div class="t" style="left:228.80px;top:9.77px;font-size:7px;line-height:8.40px;color:#333;transform:scaleX(0.9000);">S</div>
<div style="left:235.50px;top:10px;width:2px;height:9px;background:#d2d2d2"></div>
<div class="t" style="left:239.05px;top:9.77px;font-size:7px;line-height:8.40px;color:#333;transform:scaleX(0.9000);">S</div>
<div style="left:245.75px;top:10px;width:2px;height:9px;background:#d2d2d2"></div>
<div class="t" style="left:248.78px;top:9.77px;font-size:7px;line-height:8.40px;color:#333;transform:scaleX(0.9000);">M</div>
<div style="left:256.00px;top:10px;width:2px;height:9px;background:#d2d2d2"></div>
<div class="t" style="left:259.73px;top:9.77px;font-size:7px;line-height:8.40px;color:#333;transform:scaleX(0.9000);">T</div>
<div style="left:266.25px;top:10px;width:2px;height:9px;background:#d2d2d2"></div>
<div class="t" style="left:268.93px;top:9.77px;font-size:7px;line-height:8.40px;color:#333;transform:scaleX(0.9000);">W</div>
<div style="left:276.50px;top:10px;width:2px;height:9px;background:#d2d2d2"></div>
<div class="t" style="left:280.23px;top:9.77px;font-size:7px;line-height:8.40px;color:#333;transform:scaleX(0.9000);">T</div>
<div style="left:286.75px;top:10px;width:2px;height:9px;background:#d2d2d2"></div>
<div class="t" style="left:290.48px;top:9.77px;font-size:7px;line-height:8.40px;color:#333;transform:scaleX(0.9000);">F</div>
<div style="left:297.00px;top:10px;width:2px;height:9px;background:#d2d2d2"></div>
<div class="t" style="left:300.55px;top:9.77px;font-size:7px;line-height:8.40px;color:#333;transform:scaleX(0.9000);">S</div>
<div style="left:307.25px;top:10px;width:2px;height:9px;background:#d2d2d2"></div>
<div class="t" style="left:310.80px;top:9.77px;font-size:7px;line-height:8.40px;color:#333;transform:scaleX(0.9000);">S</div>
<div style="left:317.50px;top:10px;width:2px;height:9px;background:#d2d2d2"></div>
<div class="t" style="left:320.53px;top:9.77px;font-size:7px;line-height:8.40px;color:#333;transform:scaleX(0.9000);">M</div>
<div style="left:327.75px;top:10px;width:2px;height:9px;background:#d2d2d2"></div>
<div class="t" style="left:331.48px;top:9.77px;font-size:7px;line-height:8.40px;color:#333;transform:scaleX(0.9000);">T</div>
<div style="left:0;top:18.2px;width:319.5px;height:1.3px;background:#d4d4d4"></div>
</div>
<div style="left:437px;top:102.6px;width:319.5px;height:405.65999999999997px;background:#ffffff"></div>
<div style="left:447.25px;top:102.6px;width:20.5px;height:405.65999999999997px;background:repeating-conic-gradient(#ffedc6 0 25%,#fff9ea 0 50%) 0 0/2px 2px;"></div>
<div style="left:457.3px;top:102.6px;width:0.8px;height:405.65999999999997px;background:rgba(255,255,255,0.55)"></div>
<div style="left:519.0px;top:102.6px;width:20.5px;height:405.65999999999997px;background:repeating-conic-gradient(#ffedc6 0 25%,#fff9ea 0 50%) 0 0/2px 2px;"></div>
<div style="left:529.05px;top:102.6px;width:0.8px;height:405.65999999999997px;background:rgba(255,255,255,0.55)"></div>
<div style="left:590.75px;top:102.6px;width:20.5px;height:405.65999999999997px;background:repeating-conic-gradient(#ffedc6 0 25%,#fff9ea 0 50%) 0 0/2px 2px;"></div>
<div style="left:600.8px;top:102.6px;width:0.8px;height:405.65999999999997px;background:rgba(255,255,255,0.55)"></div>
<div style="left:662.5px;top:102.6px;width:20.5px;height:405.65999999999997px;background:repeating-conic-gradient(#ffedc6 0 25%,#fff9ea 0 50%) 0 0/2px 2px;"></div>
<div style="left:672.55px;top:102.6px;width:0.8px;height:405.65999999999997px;background:rgba(255,255,255,0.55)"></div>
<div style="left:734.25px;top:102.6px;width:10.25px;height:405.65999999999997px;background:repeating-conic-gradient(#ffedc6 0 25%,#fff9ea 0 50%) 0 0/2px 2px;"></div>
<div style="left:437px;top:329.05999999999995px;width:317px;height:11.8px;background:rgba(214,214,250,0.6)"></div>
<div style="left:437px;top:507.96px;width:319.5px;height:1.2px;background:#c8c8c8"></div>
<div style="left:703.2px;top:102.6px;width:1px;height:450.9px;background:#b4dcae"></div>
<div style="left:437px;top:102.6px;width:319.5px;height:413.65999999999997px;overflow:hidden">
<div style="left:-5.00px;top:2.10px;width:272.5px;height:1.7px;background:#2b2b2b"></div>
<div style="left:265.50px;top:2.10px;width:2px;height:6.5px;background:#2b2b2b"></div>
<div class="t" style="left:-16.50px;top:37.41px;font-size:7.2px;line-height:8.64px;color:#151515;font-weight:bold;transform:scaleX(0.8778);">Donald, Maria</div>
<div class="t" style="left:-7.50px;top:49.35px;font-size:7.2px;line-height:8.64px;color:#151515;font-weight:bold;transform:scaleX(0.8778);">Robert, John, James</div>
<div class="t" style="left:4.00px;top:61.29px;font-size:7.2px;line-height:8.64px;color:#151515;font-weight:bold;transform:scaleX(0.8778);">Elizabeth</div>
<div style="left:-10.25px;top:73.94px;width:51.25px;height:6.8px;background:#2e75b6"></div>
<div class="t" style="left:45.00px;top:73.23px;font-size:7.2px;line-height:8.64px;color:#151515;font-weight:bold;transform:scaleX(0.8778);">Michael</div>
<div style="left:41.00px;top:85.88px;width:20.5px;height:6.8px;background:#2e75b6"></div>
<div class="t" style="left:65.00px;top:85.17px;font-size:7.2px;line-height:8.64px;color:#151515;font-weight:bold;transform:scaleX(0.8778);">William, Charles</div>
<div style="left:-10.25px;top:97.82px;width:61.5px;height:6.8px;background:#2e75b6"></div>
<div class="t" style="left:54.75px;top:97.11px;font-size:7.2px;line-height:8.64px;color:#151515;font-weight:bold;transform:scaleX(0.8778);">Linda</div>
<div style="left:61.50px;top:109.76px;width:10.25px;height:6.8px;background:#2e75b6"></div>
<div class="t" style="left:75.75px;top:109.05px;font-size:7.2px;line-height:8.64px;color:#151515;font-weight:bold;transform:scaleX(0.8778);">Joe</div>
<div style="left:-5.00px;top:121.50px;width:88.0px;height:1.7px;background:#2b2b2b"></div>
<div style="left:81.00px;top:121.50px;width:2px;height:6.5px;background:#2b2b2b"></div>
<div style="left:81.00px;top:121.60px;width:21.5px;height:1.2px;background:#444"></div>
<div style="left:102.00px;top:121.60px;width:1.2px;height:141.78000000000003px;background:#444"></div>
<div class="t" style="left:-6.50px;top:168.75px;font-size:7.2px;line-height:8.64px;color:#151515;font-weight:bold;transform:scaleX(0.8778);">Donald, Elizabeth</div>
<div class="t" style="left:-4.60px;top:192.63px;font-size:7.2px;line-height:8.64px;color:#151515;font-weight:bold;transform:scaleX(0.8778);">Michael, Maria</div>
<div style="left:-10.25px;top:217.22px;width:51.25px;height:6.8px;background:#f78a8a"></div>
<div class="t" style="left:44.50px;top:216.51px;font-size:7.2px;line-height:8.64px;color:#151515;font-weight:bold;transform:scaleX(0.8778);">Elizabeth</div>
<div style="left:-10.25px;top:229.16px;width:51.25px;height:6.8px;background:#3268b0"></div>
<div class="t" style="left:44.50px;top:228.45px;font-size:7.2px;line-height:8.64px;color:#2a2a2a;transform:scaleX(0.9333);">Donald</div>
<div style="left:41.00px;top:241.10px;width:41.0px;height:6.8px;background:#f78a8a"></div>
<div class="t" style="left:86.00px;top:240.39px;font-size:7.2px;line-height:8.64px;color:#151515;font-weight:bold;transform:scaleX(0.8778);">Mary</div>
<div style="left:41.00px;top:253.04px;width:30.75px;height:6.8px;background:#2e75b6"></div>
<div class="t" style="left:75.75px;top:252.33px;font-size:7.2px;line-height:8.64px;color:#151515;font-weight:bold;transform:scaleX(0.8778);">Joseph</div>
<div style="left:102.50px;top:264.78px;width:165.0px;height:1.7px;background:#2b2b2b"></div>
<div style="left:102.50px;top:264.78px;width:2px;height:6.5px;background:#2b2b2b"></div>
<div style="left:265.50px;top:264.78px;width:2px;height:6.5px;background:#2b2b2b"></div>
<div style="left:102.50px;top:276.92px;width:10.25px;height:6.8px;background:#2e75b6"></div>
<div class="t" style="left:116.25px;top:276.21px;font-size:7.2px;line-height:8.64px;color:#151515;transform:scaleX(0.9333);">Bryan, Joseph</div>
<div style="left:102.50px;top:288.86px;width:20.5px;height:6.8px;background:#f78a8a"></div>
<div class="t" style="left:126.50px;top:288.15px;font-size:7.2px;line-height:8.64px;color:#151515;font-weight:bold;transform:scaleX(0.8778);">Susan, Maria</div>
<div style="left:112.75px;top:300.80px;width:20.5px;height:6.8px;background:#2e75b6"></div>
<div class="t" style="left:136.75px;top:300.09px;font-size:7.2px;line-height:8.64px;color:#151515;transform:scaleX(0.9333);">John, Lisa, Mark</div>
<div style="left:123.00px;top:312.74px;width:20.5px;height:6.8px;background:#f78a8a"></div>
<div class="t" style="left:147.00px;top:312.03px;font-size:7.2px;line-height:8.64px;color:#151515;font-weight:bold;transform:scaleX(0.8778);">Linda, David, Bryan, Donald, Elizabeth</div>
<div style="left:143.50px;top:324.68px;width:51.25px;height:6.8px;background:#f78a8a"></div>
<div class="t" style="left:198.25px;top:323.97px;font-size:7.2px;line-height:8.64px;color:#151515;font-weight:bold;transform:scaleX(0.8778);">John</div>
<div style="left:194.75px;top:336.62px;width:10.25px;height:6.8px;background:#f78a8a"></div>
<div class="t" style="left:208.50px;top:335.91px;font-size:7.2px;line-height:8.64px;color:#151515;font-weight:bold;transform:scaleX(0.8778);">Michael, Maria</div>
<div style="left:133.25px;top:348.56px;width:20.5px;height:6.8px;background:#2e75b6"></div>
<div class="t" style="left:157.25px;top:347.85px;font-size:7.2px;line-height:8.64px;color:#151515;transform:scaleX(0.9333);">James</div>
<div style="left:205.00px;top:360.50px;width:20.5px;height:6.8px;background:#f78a8a"></div>
<div class="t" style="left:229.00px;top:359.79px;font-size:7.2px;line-height:8.64px;color:#151515;font-weight:bold;transform:scaleX(0.8778);">Elizabeth</div>
<div style="left:174.25px;top:372.44px;width:20.5px;height:6.8px;background:#2e75b6"></div>
<div class="t" style="left:198.25px;top:371.73px;font-size:7.2px;line-height:8.64px;color:#151515;transform:scaleX(0.9333);">Donald</div>
<div style="left:246.00px;top:384.38px;width:20.5px;height:6.8px;background:#f78a8a"></div>
<div class="t" style="left:270.00px;top:383.67px;font-size:7.2px;line-height:8.64px;color:#151515;font-weight:bold;transform:scaleX(0.8778);">Mary</div>
<div style="left:194.75px;top:396.32px;width:20.5px;height:6.8px;background:#2e75b6"></div>
<div class="t" style="left:218.75px;top:395.61px;font-size:7.2px;line-height:8.64px;color:#151515;font-weight:bold;transform:scaleX(0.8778);">Joseph</div>
<div style="left:112.75px;top:280.52px;width:2.5px;height:1.2px;background:#8cb8e2"></div>
<div style="left:114.25px;top:280.52px;width:1.3px;height:20.28000000000003px;background:#8cb8e2"></div>
<svg style="left:112.15px;top:298.00px" width="5.5" height="3.2"><path d="M0 0H5.5L2.75 3Z" fill="#2f74b8"/></svg>
<div style="left:123.00px;top:292.46px;width:2.5px;height:1.2px;background:#8cb8e2"></div>
<div style="left:124.50px;top:292.46px;width:1.3px;height:20.28000000000003px;background:#8cb8e2"></div>
<svg style="left:122.40px;top:309.94px" width="5.5" height="3.2"><path d="M0 0H5.5L2.75 3Z" fill="#2f74b8"/></svg>
<div style="left:133.25px;top:304.40px;width:2.5px;height:1.2px;background:#8cb8e2"></div>
<div style="left:134.75px;top:304.40px;width:1.3px;height:44.160000000000025px;background:#8cb8e2"></div>
<svg style="left:132.65px;top:345.76px" width="5.5" height="3.2"><path d="M0 0H5.5L2.75 3Z" fill="#2f74b8"/></svg>
<div style="left:143.50px;top:316.34px;width:2.5px;height:1.2px;background:#8cb8e2"></div>
<div style="left:145.00px;top:316.34px;width:1.3px;height:8.340000000000032px;background:#8cb8e2"></div>
<svg style="left:142.90px;top:321.88px" width="5.5" height="3.2"><path d="M0 0H5.5L2.75 3Z" fill="#2f74b8"/></svg>
<div style="left:194.75px;top:328.28px;width:2.5px;height:1.2px;background:#8cb8e2"></div>
<div style="left:196.25px;top:328.28px;width:1.3px;height:8.340000000000032px;background:#8cb8e2"></div>
<svg style="left:194.15px;top:333.82px" width="5.5" height="3.2"><path d="M0 0H5.5L2.75 3Z" fill="#2f74b8"/></svg>
<div style="left:205.00px;top:340.22px;width:2.5px;height:1.2px;background:#8cb8e2"></div>
<div style="left:206.50px;top:340.22px;width:1.3px;height:20.28000000000003px;background:#8cb8e2"></div>
<svg style="left:204.40px;top:357.70px" width="5.5" height="3.2"><path d="M0 0H5.5L2.75 3Z" fill="#2f74b8"/></svg>
<div style="left:153.75px;top:352.16px;width:23.0px;height:1.2px;background:#8cb8e2"></div>
<div style="left:175.75px;top:352.16px;width:1.3px;height:20.28000000000003px;background:#8cb8e2"></div>
<svg style="left:173.65px;top:369.64px" width="5.5" height="3.2"><path d="M0 0H5.5L2.75 3Z" fill="#2f74b8"/></svg>
<div style="left:225.50px;top:364.10px;width:23.0px;height:1.2px;background:#8cb8e2"></div>
<div style="left:247.50px;top:364.10px;width:1.3px;height:20.28000000000003px;background:#8cb8e2"></div>
<svg style="left:245.40px;top:381.58px" width="5.5" height="3.2"><path d="M0 0H5.5L2.75 3Z" fill="#2f74b8"/></svg>
<div style="left:194.75px;top:376.04px;width:2.5px;height:1.2px;background:#8cb8e2"></div>
<div style="left:196.25px;top:376.04px;width:1.3px;height:20.28000000000003px;background:#8cb8e2"></div>
<svg style="left:194.15px;top:393.52px" width="5.5" height="3.2"><path d="M0 0H5.5L2.75 3Z" fill="#2f74b8"/></svg>
<div style="left:41.00px;top:220.82px;width:2.5px;height:1.2px;background:#8cb8e2"></div>
<div style="left:42.50px;top:220.82px;width:1.3px;height:20.28000000000003px;background:#8cb8e2"></div>
<svg style="left:40.40px;top:238.30px" width="5.5" height="3.2"><path d="M0 0H5.5L2.75 3Z" fill="#2f74b8"/></svg>
<div style="left:41.00px;top:232.76px;width:2.5px;height:1.2px;background:#8cb8e2"></div>
<div style="left:42.50px;top:232.76px;width:1.3px;height:20.28000000000003px;background:#8cb8e2"></div>
<svg style="left:40.40px;top:250.24px" width="5.5" height="3.2"><path d="M0 0H5.5L2.75 3Z" fill="#2f74b8"/></svg>
<div style="left:41.00px;top:77.54px;width:2.5px;height:1.2px;background:#8cb8e2"></div>
<div style="left:42.50px;top:77.54px;width:1.3px;height:8.340000000000003px;background:#8cb8e2"></div>
<svg style="left:40.40px;top:83.08px" width="5.5" height="3.2"><path d="M0 0H5.5L2.75 3Z" fill="#2f74b8"/></svg>
<div style="left:61.50px;top:89.48px;width:3.5px;height:1.2px;background:#8cb8e2"></div>
<div style="left:64.00px;top:89.48px;width:1.3px;height:20.28px;background:#8cb8e2"></div>
<svg style="left:61.90px;top:106.96px" width="5.5" height="3.2"><path d="M0 0H5.5L2.75 3Z" fill="#2f74b8"/></svg>
<div style="left:51.25px;top:101.42px;width:11.75px;height:1.2px;background:#8cb8e2"></div>
<div style="left:62.00px;top:101.42px;width:1.3px;height:8.340000000000003px;background:#8cb8e2"></div>
<svg style="left:59.90px;top:106.96px" width="5.5" height="3.2"><path d="M0 0H5.5L2.75 3Z" fill="#2f74b8"/></svg>
<div style="left:-3.00px;top:65.60px;width:6.5px;height:1.2px;background:#8cb8e2"></div>
<div style="left:2.50px;top:65.60px;width:1.3px;height:32.22px;background:#8cb8e2"></div>
<svg style="left:0.40px;top:95.02px" width="5.5" height="3.2"><path d="M0 0H5.5L2.75 3Z" fill="#2f74b8"/></svg>
<svg style="left:99.50px;top:259.88px" width="7" height="4"><path d="M0 0H7L3.5 3.5Z" fill="#333"/></svg>
</div>
<div style="left:756.5px;top:84px;width:10px;height:469.5px;background:#f0f0f0"></div>
<svg style="left:758.5px;top:88px" width="6" height="4"><path d="M0.5 3.5L3 1L5.5 3.5" stroke="#a0a0a0" stroke-width="0.9" fill="none"/></svg>
<svg style="left:758.5px;top:541px" width="6" height="4"><path d="M0.5 0.5L3 3L5.5 0.5" stroke="#a0a0a0" stroke-width="0.9" fill="none"/></svg>
<div style="left:756.5px;top:548.5px;width:9px;height:1px;background:#909090"></div>
<div style="left:765px;top:546px;width:1px;height:3.5px;background:#909090"></div>
<div style="left:437px;top:553.5px;width:320px;height:8.5px;background:#f0f0f0"></div>
<div style="left:561.5px;top:553.5px;width:185px;height:8.5px;background:#cacaca"></div>
<svg style="left:440.5px;top:555.5px" width="4" height="5"><path d="M3.5 0.3L0.8 2.5L3.5 4.7" stroke="#555" stroke-width="1" fill="none"/></svg>
<svg style="left:750px;top:555.5px" width="4" height="5"><path d="M0.5 0.3L3.2 2.5L0.5 4.7" stroke="#555" stroke-width="1" fill="none"/></svg>
<div style="left:756.5px;top:553.5px;width:10px;height:8.5px;background:#f0f0f0"></div>
<div style="left:766.5px;top:0px;width:1.5px;height:576px;background:#2b579a"></div>
<div style="left:0px;top:562px;width:766.5px;height:14px;background:#f0f0f0"></div>
<div style="left:0px;top:562px;width:766.5px;height:0.8px;background:#e2e2e2"></div>
<div style="left:701px;top:563.5px;width:13px;height:11px;background:#d0d0d0"></div>
<svg style="left:702px;top:565.5px" width="11" height="9" viewBox="0 0 11 9">
<rect x="0.3" y="0.3" width="10.4" height="8.4" fill="#fff" stroke="#9ab" stroke-width="0.5"/>
<rect x="0" y="0" width="11" height="2" fill="#3d96e0"/>
<path d="M2 4.5H6M4 6.5H8.5" stroke="#3a6fb8" stroke-width="1"/>
</svg>
<svg style="left:715.5px;top:565.5px" width="11" height="9" viewBox="0 0 11 9">
<rect x="0.3" y="0.3" width="10.4" height="8.4" fill="#fff" stroke="#9ab" stroke-width="0.5"/>
<rect x="0" y="0" width="11" height="2" fill="#3d96e0"/>
<rect x="5.5" y="4.5" width="4.5" height="4" fill="#f0b860"/>
</svg>
<svg style="left:729px;top:565.5px" width="11" height="9" viewBox="0 0 11 9">
<rect x="0.3" y="0.3" width="10.4" height="8.4" fill="#fff" stroke="#9ab" stroke-width="0.5"/>
<rect x="0" y="0" width="11" height="2" fill="#3d96e0"/>
<rect x="5.5" y="4.5" width="4.5" height="4" fill="#f0b860"/>
</svg>
<svg style="left:743px;top:565.5px" width="11" height="9" viewBox="0 0 11 9">
<rect x="0.3" y="0.3" width="10.4" height="8.4" fill="#fff" stroke="#9ab" stroke-width="0.5"/>
<rect x="0" y="0" width="11" height="2" fill="#3d96e0"/>
<rect x="5.5" y="4.5" width="4.5" height="4" fill="#f0b860"/>
</svg>
<svg style="left:757px;top:568px" width="6" height="6"><path d="M5 1V5H1M3 5V3H5" stroke="#aaa" stroke-width="0.8" fill="none"/></svg>
</body></html>
